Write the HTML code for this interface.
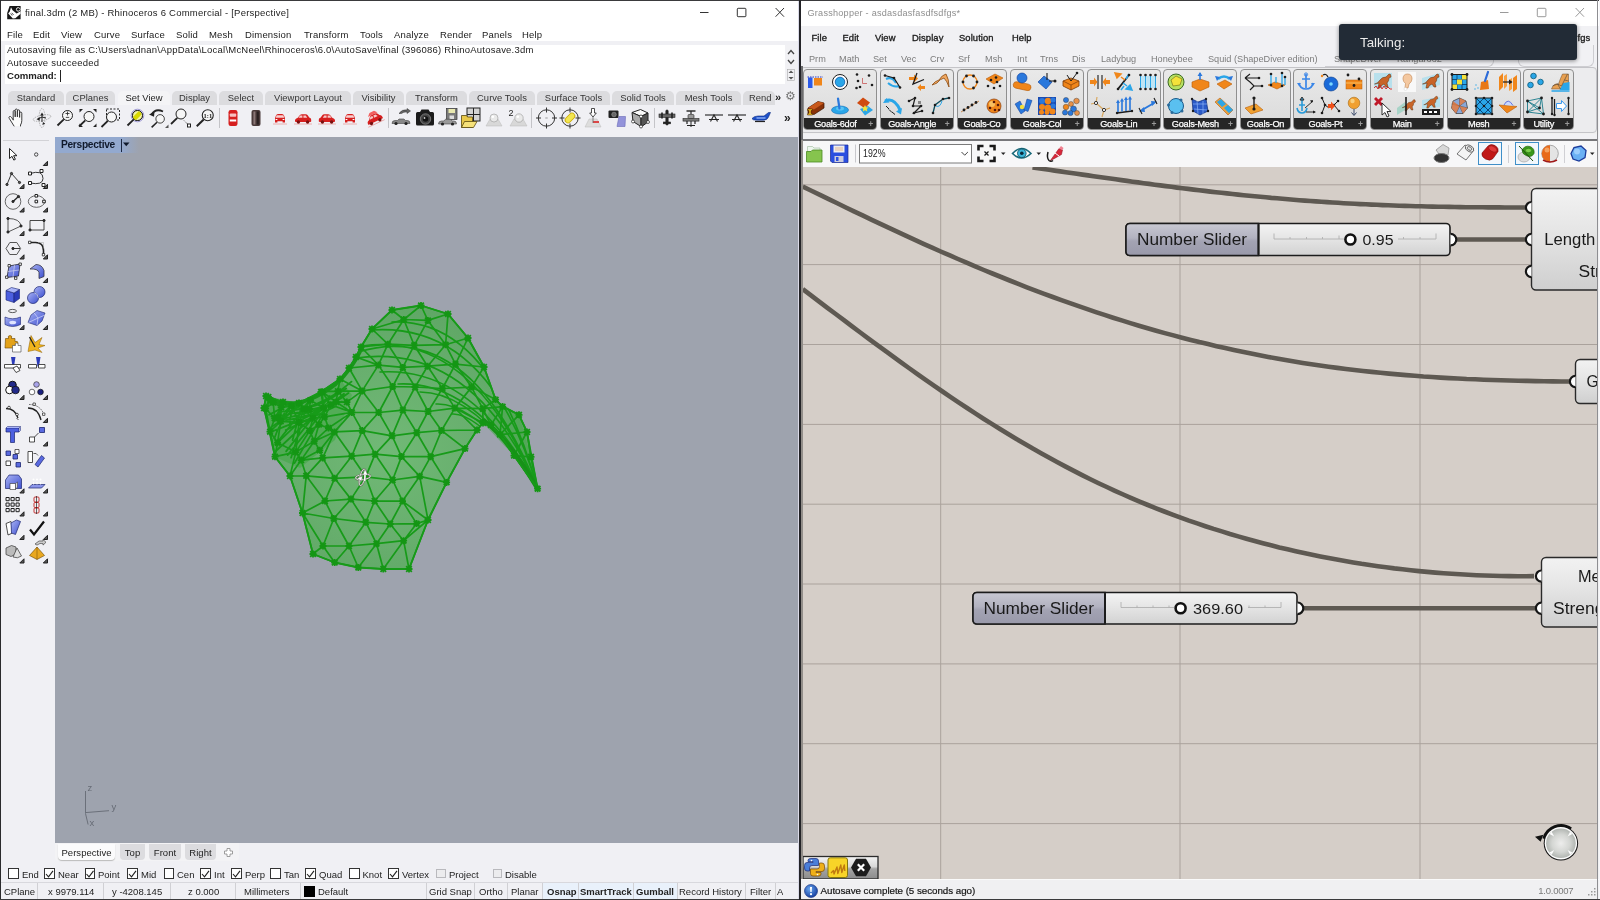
<!DOCTYPE html>
<html lang="en">
<head>
<meta charset="utf-8">
<title>Rhino + Grasshopper</title>
<style>
*{box-sizing:border-box;margin:0;padding:0}
html,body{width:1600px;height:900px;overflow:hidden;background:#f0f0f0;font-family:"Liberation Sans",sans-serif;font-size:10px;color:#111}
.abs{position:absolute}
#rh{position:absolute;left:0;top:0;width:799px;height:900px;background:#f0f0f4;overflow:hidden}
#gh{position:absolute;left:801px;top:0;width:799px;height:900px;background:#f0f0f0;overflow:hidden}
#divider{position:absolute;left:799px;top:0;width:2px;height:900px;background:#232327}
.t{position:absolute;white-space:nowrap;line-height:1}
svg{position:absolute;overflow:visible}
</style>
</head>
<body>
<div id="root" style="position:absolute;left:0;top:0;width:1600px;height:900px;will-change:transform">
<div id="rh">
<!-- title bar -->
<div class="abs" style="left:0;top:0;width:799px;height:41px;background:#fff"></div>
<div class="abs" style="left:0;top:0;width:799px;height:1px;background:#3a3a3c"></div>
<svg style="left:7.200px;top:5.800px" width="14" height="13.500" viewBox="0 0 14 13.500"><path d="M2.600 0H13.600V13.200H0.200V7Z" fill="#161616"/><path d="M4 1.200L5.600 4.200L9.600 7.600L13.600 5.200V7.800L8.400 12.200L5.800 12.600L1.200 7.400L2.800 5.400Z" fill="#fff"/><path d="M3.600 7.400L5.200 9.600M4.800 6.800L6.600 9" stroke="#161616" stroke-width="0.700"/><circle cx="11.200" cy="3.400" r="1.800" fill="none" stroke="#fff" stroke-width="0.900"/><path d="M11.200 3.400h1.800" stroke="#161616" stroke-width="0.800"/></svg>
<div class="t" id="rtitle" style="left:25px;top:8.1px;font-size:9.5px;color:#222;letter-spacing:0.23px">final.3dm (2 MB) - Rhinoceros 6 Commercial - [Perspective]</div>
<svg style="left:690px;top:0" width="108" height="25" viewBox="0 0 108 25" fill="none" stroke="#333" stroke-width="1"><path d="M10 12.5H18.5"/><rect x="47.3" y="8.3" width="8.6" height="8.4" rx="0.8"/><path d="M85.6 8L94 16.7M94 8L85.6 16.7"/></svg>
<!-- menu -->
<div class="t mnu" style="left:7px">File</div>
<div class="t mnu" style="left:33px">Edit</div>
<div class="t mnu" style="left:61px">View</div>
<div class="t mnu" style="left:94px">Curve</div>
<div class="t mnu" style="left:131px">Surface</div>
<div class="t mnu" style="left:176px">Solid</div>
<div class="t mnu" style="left:209px">Mesh</div>
<div class="t mnu" style="left:245px">Dimension</div>
<div class="t mnu" style="left:304px">Transform</div>
<div class="t mnu" style="left:360px">Tools</div>
<div class="t mnu" style="left:394px">Analyze</div>
<div class="t mnu" style="left:440px">Render</div>
<div class="t mnu" style="left:482px">Panels</div>
<div class="t mnu" style="left:522px">Help</div>
<style>.mnu{top:29.5px;font-size:9.5px;color:#1a1a1a;letter-spacing:0.17px}
.cmd{font-size:9.5px;color:#222;letter-spacing:0.22px}
.rtab{position:absolute;top:91px;height:14px;background:#dcdcdf;border-radius:5px 5px 0 0;font-size:9.4px;line-height:14.8px;color:#333;text-align:center;white-space:nowrap;letter-spacing:0.05px}
</style>
<!-- command area -->
<div class="abs" style="left:5px;top:45px;width:792px;height:23.5px;background:#fff"></div>
<div class="abs" style="left:5px;top:69px;width:792px;height:14.5px;background:#fff"></div>
<div class="abs" style="left:785px;top:45px;width:12px;height:23.5px;background:#f1f1f4"></div>
<div class="abs" style="left:785px;top:69px;width:12px;height:14.5px;background:#f1f1f4"></div>
<svg style="left:785px;top:45px" width="12" height="39" viewBox="0 0 12 39" fill="none" stroke="#444" stroke-width="1.3"><path d="M3 9 L6 5.5 L9 9M3 15 L6 18.5 L9 15"/><path d="M3.5 28h5L6 25.5Z M3.5 32h5L6 34.5Z" fill="#555" stroke="none"/><rect x="2.5" y="24.5" width="7" height="11" stroke="#aaa" stroke-width="0.6"/></svg>
<div class="t cmd" style="left:7px;top:45.4px">Autosaving file as C:\Users\adnan\AppData\Local\McNeel\Rhinoceros\6.0\AutoSave\final (396086) RhinoAutosave.3dm</div>
<div class="t cmd" style="left:7px;top:57.7px">Autosave succeeded</div>
<div class="t cmd" style="left:7px;top:71px;font-weight:bold;font-size:9.6px;letter-spacing:-0.05px">Command:</div>
<div class="abs" style="left:60px;top:70px;width:1px;height:12px;background:#222"></div>
<!-- toolbar tabs -->
<div class="rtab" style="left:8px;width:56px">Standard</div>
<div class="rtab" style="left:66px;width:49px">CPlanes</div>
<div class="rtab" style="left:118px;width:52px;background:#f4f4f6;color:#222">Set View</div>
<div class="rtab" style="left:172px;width:45px">Display</div>
<div class="rtab" style="left:219px;width:44px">Select</div>
<div class="rtab" style="left:265px;width:86px">Viewport Layout</div>
<div class="rtab" style="left:353px;width:51px">Visibility</div>
<div class="rtab" style="left:406px;width:61px">Transform</div>
<div class="rtab" style="left:469px;width:66px">Curve Tools</div>
<div class="rtab" style="left:537px;width:73px">Surface Tools</div>
<div class="rtab" style="left:612px;width:62px">Solid Tools</div>
<div class="rtab" style="left:676px;width:65px">Mesh Tools</div>
<div class="rtab" style="left:743px;width:32px;text-align:left;padding-left:6px;overflow:hidden">Rend</div>
<div class="t" style="left:775px;top:92px;font-size:11px;font-weight:bold;color:#222">»</div>
<div class="t" style="left:785px;top:90px;font-size:12px;color:#777">⚙</div>
<!-- top toolbar icons -->
<svg style="left:0;top:104px" width="800" height="30" viewBox="0 104 800 30">
<defs>
<g id="mag" fill="none" stroke="#222"><circle cx="2.5" cy="-2.5" r="5" stroke-width="1" fill="#f6f6f6"/><path d="M-1.2 1.4L-7.5 7.5" stroke-width="1.8"/></g>
<g id="carF"><path d="M-7 6h14" stroke="#e9a0a0" stroke-width="0.8"/><path d="M-5 4.5V1.5q0-2 1-4q0.5-1.5 2-1.5h4q1.5 0 2 1.5q1 2 1 4v3h-2.4v-1.2h-5.2v1.2z" fill="#d61f1f"/><path d="M-3.4-2.8h6.8l0.8 2.6h-8.4z" fill="#f9d0d0"/><rect x="-4.4" y="1" width="1.8" height="1" fill="#fff"/><rect x="2.6" y="1" width="1.8" height="1" fill="#fff"/></g>
<g id="carS"><path d="M-9 6h18" stroke="#e9a0a0" stroke-width="0.8"/><path d="M-8 3.6q-0.4-3 2.5-3.6l2.5-3q0.6-0.8 2-0.8h3.5q1.6 0 2.4 1.2l1.3 2.2q2.3 0.4 2 3.6q0 0.8-1 0.8h-14.2q-1 0-1-0.4z" fill="#d61f1f"/><path d="M-2.8-2.6h2.2v2.4h-4zM0.4-2.6h2.4l1.4 2.4h-3.8z" fill="#f7c8c8"/><circle cx="-4.6" cy="4" r="1.7" fill="#7a1010"/><circle cx="4.6" cy="4" r="1.7" fill="#7a1010"/></g>
<g id="plane" fill="#222" stroke="#222" stroke-width="0.6"><rect x="-1.2" y="-8" width="2.4" height="15" rx="1"/><rect x="-8" y="-4" width="16" height="3.4" fill="#666"/><rect x="-3.6" y="4" width="7.2" height="1.8"/><path d="M-5-5.5v6M5-5.5v6" stroke-width="1.6"/></g>
</defs>
<!-- hand -->
<g transform="translate(16.500,117.500)" stroke-linejoin="round" stroke-linecap="round"><path d="M-3.300 2V-6q0-1 1-1q1 0 1 1V-7.500q0-1 1.100-1q1.100 0 1.100 1V-6.700q0-1 1.100-1q1.100 0 1.100 1V-4.500q0-1 1.100-1q1.100 0 1.100 1V3q0 2.500-1.300 4.500V8.500H-2.500L-7.300 0.800q-0.700-1.300 0.300-1.800q1-0.400 1.900 0.800z" fill="#fbfbfb" stroke="none"/><path d="M-3.300 2.300V-5.800q0-1.200 1-1.200q1 0 1 1.200V-1M-1.300-1V-7.300q0-1.200 1.100-1.200q1.100 0 1.100 1.200V-1M0.900-1V-6.500q0-1.200 1.100-1.200q1.100 0 1.100 1.200V-0.500M3.100-0.500V-4.300q0-1.100 1.100-1.100q1.100 0 1.100 1.100V3q0 2.500-1.300 4.500V8.500M-2.500 8.500L-7.300 0.800q-0.700-1.300 0.300-1.800q1-0.400 1.900 0.800L-3.300 2.300" fill="none" stroke="#333" stroke-width="0.950"/></g>
<!-- rotate gumball -->
<g transform="translate(42,118)" fill="none" stroke="#555" stroke-width="0.7"><ellipse cx="0" cy="0" rx="3" ry="9.500" stroke="#999" stroke-dasharray="1.500 1"/><ellipse cx="0" cy="0" rx="9" ry="2.800" stroke="#999" stroke-dasharray="1.500 1" transform="rotate(-12)"/><path d="M-4 1 l4-2 l4 1 M0-4 v8" stroke="#222" stroke-width="1"/><path d="M-5.500 1.200 l3.200-2.200 v3.800z M0-5.500 l-1.800 3 h3.600z M1 4 l2.200 1.800 l-2.800 1.200z" fill="#222" stroke="none"/></g>
<!-- zoom dynamic -->
<g transform="translate(65,118)"><use href="#mag"/><path d="M0.500-4.500h4M2.500-6.500v4M0.800-0.600h3.400" stroke="#222" stroke-width="0.800"/></g>
<!-- zoom extents -->
<g transform="translate(88,118)"><use href="#mag" transform="translate(-1.500,1)"/><path d="M-8.500-5.500v-3.500h3.500zM8.500-5.500v-3.500h-3.500zM-8.500 5.500v3.500h3.500zM8.500 5.500v3.500h-3.500z" fill="#222"/></g>
<!-- zoom window -->
<g transform="translate(111,118)"><rect x="-4.500" y="-9" width="13" height="11" fill="none" stroke="#222" stroke-width="1" stroke-dasharray="2 1.500"/><use href="#mag" transform="translate(-2,1.500)"/></g>
<!-- zoom selected -->
<g transform="translate(135,118)"><circle cx="2.500" cy="-2.500" r="6.300" fill="#eeeefc" stroke="#8a84c8" stroke-width="0.800"/><use href="#mag"/><circle cx="2.500" cy="-2.500" r="5" fill="#f3f3a0" stroke="#222" stroke-width="1"/><path d="M0.500-0.500l3.500-3.500" stroke="#d8d800" stroke-width="4.500" stroke-linecap="round"/></g>
<!-- undo view -->
<g transform="translate(158,118)"><use href="#mag" transform="translate(0,3) scale(0.850)"/><path d="M-6.500-3.500q4-6.500 11.500-3" fill="none" stroke="#222" stroke-width="1.800"/><path d="M-9-3.500l5.500-2.800l-0.500 5z" fill="#222"/><path d="M10.500 6.500v3.500h-3.500z" fill="#555"/></g>
<!-- zoom target -->
<g transform="translate(181,118)"><use href="#mag" transform="translate(-2.500,-1.500)"/><path d="M3 2.500l4 4" stroke="#222" stroke-width="0.800" stroke-dasharray="1 1"/><rect x="6.500" y="6" width="3" height="3" fill="#fff" stroke="#222" stroke-width="1"/></g>
<!-- 1:1 -->
<g transform="translate(205,118)"><use href="#mag" transform="scale(1.100)"/><text x="2.800" y="0.200" font-size="6.500" font-weight="bold" text-anchor="middle" fill="#222" font-family="Liberation Serif,serif">1:1</text></g>
<path d="M219.500 108v20M388.500 108v20M531.500 108v20M654.500 108v20" stroke="#c4c4c8" stroke-width="1"/>
<!-- car top red / dark -->
<g transform="translate(233,118)"><rect x="-4.500" y="-8" width="9" height="16" rx="2.200" fill="#d61f1f"/><rect x="-3.200" y="-4.500" width="6.400" height="3.200" rx="0.800" fill="#f7c0c0"/><rect x="-3.200" y="1.500" width="6.400" height="2" fill="#fff"/></g>
<g transform="translate(256,118)"><rect x="-4.500" y="-8" width="9" height="16" rx="2" fill="#4a3a3a"/><rect x="-2.600" y="-6.500" width="2" height="13" fill="#8a7676"/><rect x="0.800" y="-6.500" width="2" height="13" fill="#2a2020"/></g>
<use href="#carF" transform="translate(280,118)"/>
<use href="#carS" transform="translate(303,118)"/>
<use href="#carS" transform="translate(327,118) scale(-1,1)"/>
<use href="#carF" transform="translate(350,118)"/>
<g transform="translate(374,118) rotate(-25)"><use href="#carS"/><path d="M-5-3.500l3-3h5l2.500 2.800z" fill="#f26060"/></g>
<!-- car + hand -->
<g transform="translate(401,118)"><path d="M-9 5.500q0-3 3-3h2.500l1.500-1.500h5l1.500 1.500h2q2.500 0 2.500 3z" fill="#888" stroke="#444" stroke-width="0.600"/><circle cx="-5" cy="5.500" r="1.600" fill="#222"/><circle cx="5" cy="5.500" r="1.600" fill="#222"/><path d="M-2-4.500q3-4.500 8-3.500v-1.500l3.500 2.500l-3.500 2.500v-1.500q-3.500-0.500-5.500 1.500z" fill="#666" stroke="#333" stroke-width="0.500"/></g>
<!-- camera -->
<g transform="translate(425,118)"><path d="M-9-4.500q0-1.500 1.500-1.500h2.500l1.500-2.500h7l1.500 2.500h2.500q1.500 0 1.500 1.500v10.500q0 1.500-1.500 1.500h-15q-1.500 0-1.500-1.500z" fill="#1b1b1b"/><circle cx="0.500" cy="1" r="5.200" fill="#444" stroke="#888" stroke-width="0.800"/><circle cx="0.500" cy="1" r="2.800" fill="#111"/><circle cx="-0.500" cy="0" r="0.900" fill="#ccc"/></g>
<!-- car + save -->
<g transform="translate(448,118)"><rect x="-1.500" y="-9.500" width="10.500" height="11" fill="#7a7a7a" stroke="#333" stroke-width="0.700"/><rect x="0.500" y="-9" width="6.500" height="4" fill="#e9e9b0"/><rect x="1.500" y="-2.500" width="4.500" height="3.500" fill="#ddd"/><path d="M-9.500 6q0-3 3-3h2.500l1.500-1.800h5l1.500 1.800h2q2.500 0 2.500 3z" fill="#9a9a9a" stroke="#444" stroke-width="0.600"/><circle cx="-5.500" cy="6" r="1.600" fill="#222"/><circle cx="4.500" cy="6" r="1.600" fill="#222"/></g>
<!-- folder + grid -->
<g transform="translate(471,118)"><rect x="-4" y="-10" width="13" height="13" fill="#d4d4d4" stroke="#222" stroke-width="1"/><path d="M2.500-10v13M-4-3.500h13" stroke="#222" stroke-width="1"/><path d="M-9.500-2.500h5l1 1.500h5v10.500h-11z" fill="#e8c84a" stroke="#5a4a10" stroke-width="0.800"/><path d="M-9.500 9.500l3-6h12.500l-3.500 6z" fill="#f7e27a" stroke="#5a4a10" stroke-width="0.800"/></g>
<!-- sphere -->
<g transform="translate(494,118)"><path d="M-8 8l4-7h8l4 7z" fill="#d8d8d8" stroke="#bbb" stroke-width="0.500"/><circle cx="0" cy="0" r="4" fill="#e9e9e9" stroke="#999" stroke-width="0.600"/><circle cx="-1.200" cy="-1.300" r="1.300" fill="#fff"/></g>
<g transform="translate(517,118)"><path d="M-7 8l4-7h9l4 7z" fill="#d8d8d8" stroke="#bbb" stroke-width="0.500"/><circle cx="2" cy="0" r="4.200" fill="#e9e9e9" stroke="#999" stroke-width="0.600"/><circle cx="0.800" cy="-1.300" r="1.300" fill="#fff"/><text x="-8.500" y="-2.500" font-size="9" fill="#222" font-family="Liberation Sans,sans-serif">2</text></g>
<!-- targets -->
<g transform="translate(546.500,118)" fill="none" stroke="#333" stroke-width="1"><circle r="8.200"/><path d="M0-10.500v5M0 10.500v-5M-10.500 0h5M10.500 0h-5"/><path d="M-1.200 0h2.400" stroke="#999"/></g>
<g transform="translate(570,118)" fill="none" stroke="#333" stroke-width="1"><circle r="8.200"/><path d="M0-10.500v5M0 10.500v-5M-10.500 0h5M10.500 0h-5"/><path d="M-2 2l4-4" stroke="#caa800" stroke-width="6.500" stroke-linecap="round"/><path d="M-2 2l4-4" stroke="#f2e650" stroke-width="5" stroke-linecap="round"/></g>
<!-- arrow to plane -->
<g transform="translate(593,118)"><path d="M-8 9l4-8h8l4 8z" fill="#ddd" stroke="#bbb" stroke-width="0.500"/><path d="M0 4h6" stroke="#d22" stroke-width="1.600"/><path d="M-1.500-9.500h3v4.500h1.800l-3.300 4l-3.300-4h1.800z" fill="#fff" stroke="#222" stroke-width="0.800"/><path d="M0-1v6" stroke="#666" stroke-width="0.800"/></g>
<!-- camera + blue -->
<g transform="translate(617,118)"><rect x="-8.500" y="-7.500" width="10" height="7.500" rx="1" fill="#222"/><circle cx="-3" cy="-3.500" r="2.300" fill="#666" stroke="#aaa" stroke-width="0.500"/><path d="M2-1.500h6.500l-0.500 10h-8z" fill="#8a8ad8" stroke="#5a5ab0" stroke-width="0.600" opacity="0.900"/></g>
<!-- cube -->
<g transform="translate(640,118)" stroke="#222" stroke-width="1" stroke-linejoin="round"><path d="M-8-5.500l8.500-3l7.500 3.500l-7 3.500z" fill="#fafafa"/><path d="M-8-5.500l9 4v10l-8-5z" fill="#aaa"/><path d="M1-1.500l7-3.500v9l-7 5z" fill="#555"/><circle cx="1" cy="-1.500" r="1.500" fill="#fff" stroke-width="0.700"/><circle cx="-7" cy="3.500" r="1.500" fill="#fff" stroke-width="0.700"/><circle cx="8" cy="4" r="1.500" fill="#fff" stroke-width="0.700"/><circle cx="1" cy="8.500" r="1.500" fill="#fff" stroke-width="0.700"/></g>
<!-- planes -->
<use href="#plane" transform="translate(667,118)"/>
<g transform="translate(691,118)" fill="#333" stroke="#222" stroke-width="0.600"><rect x="-8" y="0.500" width="16" height="2.600" fill="#777"/><rect x="-3" y="-3.500" width="6" height="4" rx="1" fill="#999"/><path d="M-4.500-7h9" stroke-width="1.400"/><path d="M0-7v3M-4 3v3M4 3v3M-4 7.500h8" stroke-width="1.200"/><path d="M0 3v6" stroke-width="1"/></g>
<g transform="translate(714,118)" fill="none" stroke="#222" stroke-width="1.100"><path d="M-9-3h18"/><path d="M-3.500 3.500l3.500-6.500l3.500 6.500M-5 1.500h10"/></g>
<g transform="translate(737,118)" fill="none" stroke="#222" stroke-width="1.100"><path d="M-9-3h18"/><path d="M-3.500 3.500l3.500-6.500l3.500 6.500M-5 1.500h10"/></g>
<g transform="translate(761,118)"><path d="M-9 0.500q2-2.500 6-2.500h6l4.500-3.500h2l-2 4.500q-1 3-5 3.200h-7q-4 0-4.500-1.700z" fill="#1e50c8" stroke="#0a2a80" stroke-width="0.600"/><path d="M-4.500 0h9" stroke="#9ec0ff" stroke-width="1.200"/><path d="M-6 3.500h10" stroke="#222" stroke-width="1.200"/></g>
<text x="784" y="121.500" font-size="12" font-weight="bold" fill="#222" font-family="Liberation Sans,sans-serif">»</text>
</svg>
<!-- left sidebar -->
<div class="abs" style="left:3px;top:139.500px;width:46px;height:1px;background:#d2d2d6"></div>
<svg style="left:0;top:140px" width="54" height="430" viewBox="0 140 54 430">
<defs>
<path id="ct" d="M0 0v-4.200l-4.200 4.200z" fill="#555"/>
<linearGradient id="bl" x1="0" y1="0" x2="1" y2="1"><stop offset="0" stop-color="#aab4f4"/><stop offset="1" stop-color="#3d4fcf"/></linearGradient>
</defs>
<g fill="none" stroke="#222" stroke-width="1" stroke-linejoin="round">
<!-- row1 -->
<path d="M9.500 148.500v10l2.500-2.200l1.800 3.800l1.600-0.800l-1.800-3.600h3.400z" fill="#fff"/>
<circle cx="36.200" cy="154.500" r="1.700" stroke-width="0.800"/><use href="#ct" x="47.500" y="165.500"/>
<!-- row2 -->
<path d="M7 184.500l4.500-11l8 9" stroke-width="0.900"/><circle cx="7" cy="184.500" r="1.100" fill="#555"/><circle cx="11.500" cy="173.500" r="1.100" fill="#555"/><circle cx="19.500" cy="182.500" r="1.100" fill="#555"/><use href="#ct" x="24" y="188.500"/>
<path d="M30 173.500q13-4 13 5q0 7-13 4.500" stroke-width="0.900"/><rect x="28.500" y="172" width="3" height="3" fill="#fff"/><rect x="40" y="169.500" width="3" height="3" fill="#fff"/><rect x="28.500" y="181.500" width="3" height="3" fill="#fff"/><rect x="42" y="183.500" width="3" height="3" fill="#fff"/><use href="#ct" x="47.500" y="188.500"/>
<!-- row3 -->
<circle cx="13" cy="201.500" r="7.800" stroke-width="0.800" stroke="#444"/><path d="M13 201.500l5.500-5" stroke-width="1.300"/><circle cx="13" cy="201.500" r="1.100" fill="#333"/><circle cx="18.500" cy="196.500" r="1.100" fill="#333"/><use href="#ct" x="24" y="212"/>
<ellipse cx="36.500" cy="201.500" rx="8.200" ry="5.800" stroke-width="0.800" stroke="#444"/><rect x="35" y="194.500" width="2.600" height="2.600" fill="#fff"/><rect x="35" y="200.200" width="2.600" height="2.600" fill="#fff"/><rect x="42.700" y="200.200" width="2.600" height="2.600" fill="#fff"/><use href="#ct" x="47.500" y="212"/>
<!-- row4 -->
<path d="M8 218.500q12 0 13 7.500l-13 6z" stroke-width="0.900" stroke="#444"/><circle cx="8" cy="218.500" r="1.100" fill="#333"/><circle cx="21" cy="226" r="1.100" fill="#333"/><circle cx="8" cy="232" r="1.100" fill="#333"/><use href="#ct" x="24" y="235.500"/>
<rect x="30" y="220.500" width="14" height="9.500" stroke-width="0.900" stroke="#333"/><circle cx="30" cy="230" r="1.100" fill="#333"/><circle cx="44" cy="220.500" r="1.100" fill="#333"/><use href="#ct" x="47.500" y="235.500"/>
<!-- row5 -->
<path d="M6 248.500l3.800-6h7l3.800 6l-3.800 6h-7z" stroke-width="0.900" stroke="#444"/><path d="M13 248.500h7" stroke-width="0.900"/><circle cx="13" cy="248.500" r="1.100" fill="#333"/><use href="#ct" x="24" y="259"/>
<path d="M29.500 242.500h6q8 0 8 8v4.500" stroke-width="1.600"/><path d="M38 242.500h5.500v6" stroke="#aaa" stroke-width="0.600"/><rect x="28.500" y="241.200" width="2.400" height="2.400" fill="#fff" stroke-width="0.800"/><rect x="42.300" y="253.500" width="2.400" height="2.400" fill="#fff" stroke-width="0.800"/><use href="#ct" x="47.500" y="259"/>
<!-- row6 -->
<path d="M9 266l11-2l-1.500 12l-11.500 1.500z" fill="url(#bl)" stroke="#223" stroke-width="0.800"/><path d="M14.500 265l-1.500 12M8 271.500l11-1.500" stroke="#dde" stroke-width="0.600"/><rect x="8" y="264.500" width="2.400" height="2.400" fill="#fff" stroke-width="0.800"/><rect x="19" y="263" width="2.400" height="2.400" fill="#fff" stroke-width="0.800"/><rect x="5.500" y="276" width="2.400" height="2.400" fill="#fff" stroke-width="0.800"/><rect x="14.500" y="277" width="2.400" height="2.400" fill="#fff" stroke-width="0.800"/><use href="#ct" x="24" y="282.500"/>
<path d="M30 269l6-4.500q6 0 8 6v6l-5 2v-6q-1-4-9-3.500z" fill="url(#bl)" stroke="#334" stroke-width="0.800"/><use href="#ct" x="47.500" y="282.500"/>
<!-- row7 -->
<path d="M6 290.500l8 2.500v9.500l-8-2.500z" fill="#4c5fe0" stroke="#1a2470" stroke-width="0.600"/><path d="M14 293l5.500-3.500v9l-5.500 4z" fill="#2a3ab8" stroke="#1a2470" stroke-width="0.600"/><path d="M6 290.500l5.500-3l8 2l-5.500 3.500z" fill="#a9b4f8" stroke="#1a2470" stroke-width="0.600"/><use href="#ct" x="24" y="306"/>
<circle cx="39.500" cy="292" r="5.500" fill="url(#bl)" stroke="#1a2470" stroke-width="0.700"/><circle cx="33" cy="298" r="5.500" fill="url(#bl)" stroke="#1a2470" stroke-width="0.700"/><path d="M34.200 292.700q4 1 4.200 5.200" stroke="#fff" stroke-width="0.600"/><use href="#ct" x="47.500" y="306"/>
<!-- row8 -->
<ellipse cx="12.500" cy="311" rx="4" ry="1.600" stroke-width="0.800" stroke="#333"/><path d="M5 317q7.500 3.500 15.500 0v7.500q-8 4-15.500 0z" fill="url(#bl)" stroke="#1a2470" stroke-width="0.600"/><ellipse cx="12.700" cy="322.500" rx="3.500" ry="1.800" fill="#dfe4ff" stroke="none"/><use href="#ct" x="24" y="329.500"/>
<path d="M31 315l6-4.500l8 2.500l-3 8l-5 4.500l-9-3z" fill="url(#bl)" stroke="#1a2470" stroke-width="0.600"/><path d="M34 312.800l4 5.200l7-3M28.500 322.500l9.500-4.500l-1 7" stroke="#e4e8ff" stroke-width="0.600"/><use href="#ct" x="47.500" y="329.500"/>
<!-- row9 -->
<path d="M5.500 338.500h3q-1-3 1.500-3q2.500 0 1.500 3h3.500v3q3-1 3 1.500q0 2.500-3 1.500v3.500h-10z" fill="#e3a21a" stroke="#6a4400" stroke-width="0.600"/><path d="M12.500 345.500h3q-1-2.500 1.200-2.500q2.300 0 1.300 2.500h3v6.500h-8.500z" fill="#fff" stroke="#444" stroke-width="0.600"/>
<path d="M28 351.500l3-16l4 7l7-5l-3 7l6 1l-7 2.500l4 4.500l-7-2.500z" fill="#f0b41c" stroke="#8a5a00" stroke-width="0.500"/><path d="M29.500 337l5.500 10" stroke="#222" stroke-width="1.300"/>
<!-- row10 -->
<path d="M11 357h4.500l-1.500 9.500h-1.500z" fill="#2a3ab8" stroke="none"/><path d="M4.500 364.500h16v3.500h-16z" fill="#fff" stroke-width="0.800"/><path d="M13 368l4-2l3 4.500l-4 2z" fill="#fff" stroke-width="0.800"/>
<path d="M36 357h4.500l-1.500 9.500h-1.500z" fill="#2a3ab8" stroke="none"/><path d="M28.500 364.500h8v3.500h-8zM38.500 364.500h6.500v3.500h-6.500z" fill="#fff" stroke-width="0.800"/>
<!-- row11 -->
<circle cx="12.500" cy="385" r="3.800" fill="#222a8a" stroke="#111"/><circle cx="9.500" cy="390" r="3.800" fill="#fff" stroke="#111"/><circle cx="15.500" cy="390" r="3.800" fill="#222a8a" stroke="#111" stroke-width="0.800"/><use href="#ct" x="24" y="399.500"/>
<circle cx="36.500" cy="384.500" r="2.800" fill="#a9a4e8" stroke="#333" stroke-width="0.700"/><circle cx="32" cy="392" r="2.800" fill="#fff" stroke="#333" stroke-width="0.700"/><circle cx="40.500" cy="392" r="2.800" fill="#1a2080" stroke="#111" stroke-width="0.700"/><use href="#ct" x="47.500" y="399.500"/>
<!-- row12 -->
<path d="M6 408.500q9 0 12 9.500" stroke-width="1.300"/><circle cx="9" cy="407.500" r="1.300" fill="#fff" stroke-width="0.800"/><circle cx="17" cy="414.500" r="1.300" fill="#fff" stroke-width="0.800"/><path d="M16.500 418l2 2" stroke-width="0.800"/>
<path d="M28 408q10 0 13 12" stroke-width="1.300"/><path d="M29 404.500q11 0 15 10" stroke-width="0.700" stroke-dasharray="1.500 1"/><rect x="33" y="403" width="2.400" height="2.400" fill="#fff" stroke-width="0.700"/><rect x="42.500" y="413" width="2.400" height="2.400" fill="#fff" stroke-width="0.700"/><use href="#ct" x="47.500" y="422.500"/>
<!-- row13 -->
<path d="M6 428h13v4h-4.500v10.500h-4v-10.500h-4.500z" fill="#4c5fe0" stroke="#1a2470" stroke-width="0.700"/><path d="M6 428l1.500-1.500h13l-1.500 1.500M19 432l1.500-1.500v-4" fill="#a9b4f8" stroke="#1a2470" stroke-width="0.500"/>
<rect x="29.500" y="437" width="5" height="5" fill="#fff" stroke-width="0.800"/><rect x="39.500" y="427.500" width="5" height="5" fill="#5a6ae0" stroke="#1a2470" stroke-width="0.800"/><path d="M34.500 437l4-4" stroke-width="0.800"/><use href="#ct" x="47.500" y="446"/>
<!-- row14 -->
<rect x="6" y="451" width="4.500" height="4.500" fill="#5a6ae0" stroke="#1a2470" stroke-width="0.800"/><rect x="13" y="454.500" width="4.500" height="4.500" fill="#5a6ae0" stroke="#1a2470" stroke-width="0.800"/><rect x="6" y="461" width="4.500" height="4.500" fill="#fff" stroke-width="0.800"/><rect x="16" y="462.500" width="4.500" height="4.500" fill="#5a6ae0" stroke="#1a2470" stroke-width="0.800"/><rect x="15" y="449.500" width="4" height="4" fill="#fff" stroke-width="0.700"/>
<rect x="28" y="451.500" width="4.500" height="11" fill="#fff" stroke-width="0.800"/><path d="M35 464.500l6.500-9l3 2.500l-6.500 9z" fill="#5a6ae0" stroke="#1a2470" stroke-width="0.700"/><path d="M33.500 453.500q3-1 4.500 2" stroke-width="0.700"/>
<!-- row15 -->
<path d="M5.500 480l3.500-5h9.500l3 4v9.500h-16z" fill="url(#bl)" stroke="#1a2470" stroke-width="0.700"/><path d="M10 483.500h5.500v6h-5.500z" fill="#fff" stroke="#333" stroke-width="0.600"/><path d="M15.500 483.500l2-1.500v5l-2 2.500z" fill="#ddd" stroke="#333" stroke-width="0.500"/><use href="#ct" x="24" y="493"/>
<path d="M28.500 488l3.500-3.500h13l-3.500 3.500z" fill="#8a94ea" stroke="#1a2470" stroke-width="0.700"/><circle cx="33.500" cy="479.500" r="1" fill="#fff" stroke="none"/><circle cx="37" cy="479.500" r="1" fill="#fff" stroke="none"/><circle cx="40.500" cy="479.500" r="1" fill="#fff" stroke="none"/><path d="M33.500 482v2.500M37 482v2.500M40.500 482v2.500" stroke="#fff" stroke-width="0.800"/><use href="#ct" x="47.500" y="493"/>
<!-- row16 -->
<g stroke-width="1"><rect x="6" y="497.500" width="3.200" height="3.200"/><rect x="11" y="497.500" width="3.200" height="3.200"/><rect x="16" y="497.500" width="3.200" height="3.200"/><rect x="6" y="503" width="3.200" height="3.200"/><rect x="11" y="503" width="3.200" height="3.200"/><rect x="16" y="503" width="3.200" height="3.200"/><rect x="6" y="508.500" width="3.200" height="3.200"/><rect x="11" y="508.500" width="3.200" height="3.200"/><rect x="16" y="508.500" width="3.200" height="3.200"/></g><use href="#ct" x="24" y="516"/>
<g stroke="#c02020" stroke-width="0.900"><rect x="34" y="497" width="5" height="5" rx="1"/><rect x="34" y="502.500" width="5" height="5" rx="1"/><rect x="34" y="508" width="5" height="5" rx="1"/></g><path d="M36.500 496v18" stroke="#222" stroke-width="0.700"/><use href="#ct" x="47.500" y="516"/>
<!-- row17 -->
<path d="M6 523.500l5-2l1.500 11.500l-4.500 2z" fill="#fff" stroke-width="0.800"/><path d="M11 523l5.500-3l4 1.500l-5 13l-4-1.500z" fill="url(#bl)" stroke="#1a2470" stroke-width="0.700"/><use href="#ct" x="24" y="539.500"/>
<path d="M30 529.500l4 5l10-13" stroke="#111" stroke-width="2.200" stroke-linejoin="miter"/><use href="#ct" x="47.500" y="539.500"/>
<!-- row18 -->
<path d="M6 548l5.500-2.500l4.500 1.500v7l-5 2.500l-5-2z" fill="#bbb" stroke="#333" stroke-width="0.700"/><path d="M13 557l4-9l4.500 8q-4 3-8.500 1z" fill="#ddd" stroke="#333" stroke-width="0.700"/><use href="#ct" x="24" y="563"/>
<path d="M29.500 555.500l7.500-8.500l7.500 8.500l-7.500 4z" fill="#e9a820" stroke="#6a4400" stroke-width="0.600"/><path d="M37 547v12.500" stroke="#6a4400" stroke-width="0.500"/><path d="M35 544q4-4.500 8-3v-1.500l3 2.800l-3 2.800v-1.500q-3-1-6 1.500z" fill="#ccc" stroke="#333" stroke-width="0.600"/><use href="#ct" x="47.500" y="563"/>
</g>
</svg>
<!-- viewport -->
<div class="abs" style="left:54.500px;top:137px;width:743px;height:705.500px;background:#9ea3ae"></div>
<div class="abs" style="left:54.500px;top:137px;width:84px;height:16px;background:linear-gradient(90deg,#93a9cf 0,#93a9cf 78%,#9ea3ae 100%)"></div>
<div class="t" style="left:61px;top:139.500px;font-size:10.200px;letter-spacing:-0.300px;font-weight:bold;color:#111a2c">Perspective</div>
<div class="abs" style="left:121px;top:139px;width:1px;height:12.500px;background:#1c2740"></div>
<svg style="left:123px;top:142px" width="7" height="5" viewBox="0 0 7 5"><path d="M0 0.500h6.500l-3.250 3.800z" fill="#111a2c"/></svg>
<svg style="left:54px;top:137px" width="744" height="706" viewBox="54 137 744 706">
<defs><radialGradient id="mg" cx="0.450" cy="0.550" r="0.600"><stop offset="0" stop-color="#71b976"/><stop offset="0.600" stop-color="#67ae6d"/><stop offset="1" stop-color="#5ea564"/></radialGradient><clipPath id="mc"><path d="M266.0 396.0L283.0 402.0L299.0 403.0L321.0 392.0L340.0 379.0L349.0 368.0L356.0 357.0L361.0 347.0L372.0 329.0L392.0 310.0L421.0 305.5L448.0 314.0L468.0 338.0L484.0 367.0L495.6 399.6L502.6 406.6L519.0 414.8L527.0 432.0L531.0 456.8L537.6 488.7L514.0 455.6L500.0 434.6L491.0 425.0L483.0 423.0L477.0 430.0L465.0 448.6L446.6 482.4L428.0 520.0L409.0 569.0L383.3 569.0L358.3 567.5L334.7 562.5L313.0 554.0L302.5 513.0L290.0 476.0L275.0 456.7L270.0 431.7L264.0 408.0Z"/></clipPath></defs>
<path d="M266.0 396.0L283.0 402.0L299.0 403.0L321.0 392.0L340.0 379.0L349.0 368.0L356.0 357.0L361.0 347.0L372.0 329.0L392.0 310.0L421.0 305.5L448.0 314.0L468.0 338.0L484.0 367.0L495.6 399.6L502.6 406.6L519.0 414.8L527.0 432.0L531.0 456.8L537.6 488.7L514.0 455.6L500.0 434.6L491.0 425.0L483.0 423.0L477.0 430.0L465.0 448.6L446.6 482.4L428.0 520.0L409.0 569.0L383.3 569.0L358.3 567.5L334.7 562.5L313.0 554.0L302.5 513.0L290.0 476.0L275.0 456.7L270.0 431.7L264.0 408.0Z" fill="url(#mg)"/>
<path d="M266 396L299 403L340 379L352 395L335 440L300 468L275 457L264 408Z" fill="#3fa843" opacity="0.550"/>
<path d="M483 423L495.600 399.600L519 414.800L531 456.800L537.600 488.700L514 455.600Z" fill="#4aa64e" opacity="0.600"/>
<path d="M266.0 396.0L264.0 408.0M266.0 396.0L270.4 400.4M266.0 396.0L268.4 397.0M283.0 402.0L299.0 403.0M283.0 402.0L270.4 400.4M283.0 402.0L281.2 407.3M283.0 402.0L273.2 402.6M283.0 402.0L268.4 397.0M283.0 402.0L291.5 406.1M299.0 403.0L321.0 392.0M299.0 403.0L303.9 409.2M299.0 403.0L310.4 400.2M299.0 403.0L291.5 406.1M321.0 392.0L340.0 379.0M321.0 392.0L323.6 408.0M321.0 392.0L322.1 391.7M321.0 392.0L310.4 400.2M340.0 379.0L349.0 368.0M340.0 379.0L362.2 390.9M340.0 379.0L337.9 391.2M340.0 379.0L322.1 391.7M349.0 368.0L356.0 357.0M349.0 368.0L378.4 365.1M349.0 368.0L362.2 390.9M356.0 357.0L361.0 347.0M356.0 357.0L378.4 365.1M361.0 347.0L372.0 329.0M361.0 347.0L387.9 344.2M361.0 347.0L378.4 365.1M372.0 329.0L392.0 310.0M372.0 329.0L403.8 319.5M372.0 329.0L387.9 344.2M392.0 310.0L421.0 305.5M392.0 310.0L403.8 319.5M421.0 305.5L448.0 314.0M421.0 305.5L403.8 319.5M421.0 305.5L427.9 320.4M448.0 314.0L468.0 338.0M448.0 314.0L427.9 320.4M448.0 314.0L445.6 344.7M468.0 338.0L484.0 367.0M468.0 338.0L445.6 344.7M468.0 338.0L455.5 364.1M484.0 367.0L495.6 399.6M484.0 367.0L455.5 364.1M484.0 367.0L471.5 387.1M495.6 399.6L502.6 406.6M495.6 399.6L471.5 387.1M495.6 399.6L482.8 408.7M502.6 406.6L519.0 414.8M502.6 406.6L500.0 434.6M502.6 406.6L491.0 425.0M502.6 406.6L482.8 408.7M519.0 414.8L527.0 432.0M519.0 414.8L500.0 434.6M527.0 432.0L531.0 456.8M527.0 432.0L537.6 488.7M527.0 432.0L514.0 455.6M527.0 432.0L500.0 434.6M531.0 456.8L537.6 488.7M531.0 456.8L514.0 455.6M537.6 488.7L514.0 455.6M514.0 455.6L500.0 434.6M500.0 434.6L491.0 425.0M491.0 425.0L483.0 423.0M491.0 425.0L482.8 408.7M483.0 423.0L477.0 430.0M483.0 423.0L454.9 408.1M483.0 423.0L482.8 408.7M477.0 430.0L465.0 448.6M477.0 430.0L454.9 408.1M477.0 430.0L441.5 430.5M465.0 448.6L446.6 482.4M465.0 448.6L441.5 430.5M465.0 448.6L430.7 456.7M446.6 482.4L428.0 520.0M446.6 482.4L430.7 456.7M446.6 482.4L419.7 476.3M428.0 520.0L409.0 569.0M428.0 520.0L419.7 476.3M428.0 520.0L402.5 501.1M428.0 520.0L416.6 523.6M428.0 520.0L403.6 540.7M409.0 569.0L383.3 569.0M409.0 569.0L403.6 540.7M383.3 569.0L358.3 567.5M383.3 569.0L376.5 543.7M383.3 569.0L403.6 540.7M358.3 567.5L334.7 562.5M358.3 567.5L349.0 546.0M358.3 567.5L376.5 543.7M334.7 562.5L313.0 554.0M334.7 562.5L323.0 546.0M334.7 562.5L349.0 546.0M313.0 554.0L302.5 513.0M313.0 554.0L323.0 546.0M302.5 513.0L290.0 476.0M302.5 513.0L306.2 475.8M302.5 513.0L325.0 501.0M302.5 513.0L333.8 518.5M302.5 513.0L323.0 546.0M290.0 476.0L275.0 456.7M290.0 476.0L295.8 452.1M290.0 476.0L306.2 475.8M290.0 476.0L301.2 460.1M275.0 456.7L270.0 431.7M275.0 456.7L264.0 408.0M275.0 456.7L295.8 452.1M275.0 456.7L277.6 442.7M270.0 431.7L264.0 408.0M270.0 431.7L274.7 418.3M270.0 431.7L277.6 442.7M270.0 431.7L265.6 408.5M270.0 431.7L280.7 421.3M264.0 408.0L270.4 400.4M264.0 408.0L265.6 408.5M403.8 319.5L427.9 320.4M403.8 319.5L387.9 344.2M403.8 319.5L414.2 345.3M427.9 320.4L414.2 345.3M427.9 320.4L445.6 344.7M387.9 344.2L414.2 345.3M387.9 344.2L378.4 365.1M387.9 344.2L402.8 367.4M414.2 345.3L445.6 344.7M414.2 345.3L402.8 367.4M414.2 345.3L427.6 366.2M445.6 344.7L427.6 366.2M445.6 344.7L455.5 364.1M378.4 365.1L402.8 367.4M378.4 365.1L362.2 390.9M378.4 365.1L392.7 386.5M402.8 367.4L427.6 366.2M402.8 367.4L392.7 386.5M402.8 367.4L415.1 387.0M427.6 366.2L455.5 364.1M427.6 366.2L415.1 387.0M427.6 366.2L442.4 388.5M455.5 364.1L442.4 388.5M455.5 364.1L471.5 387.1M362.2 390.9L392.7 386.5M362.2 390.9L351.9 412.4M362.2 390.9L378.7 412.5M362.2 390.9L346.9 402.1M362.2 390.9L337.9 391.2M392.7 386.5L415.1 387.0M392.7 386.5L378.7 412.5M392.7 386.5L402.9 410.1M415.1 387.0L442.4 388.5M415.1 387.0L402.9 410.1M415.1 387.0L428.1 411.5M442.4 388.5L471.5 387.1M442.4 388.5L428.1 411.5M442.4 388.5L454.9 408.1M471.5 387.1L454.9 408.1M471.5 387.1L482.8 408.7M323.6 408.0L322.1 391.7M323.6 408.0L309.4 409.2M323.6 408.0L312.8 418.2M323.6 408.0L324.6 416.9M323.6 408.0L310.4 400.2M323.6 408.0L330.8 404.8M351.9 412.4L378.7 412.5M351.9 412.4L334.5 431.9M351.9 412.4L362.2 430.6M351.9 412.4L346.9 402.1M351.9 412.4L336.1 402.0M351.9 412.4L324.6 416.9M351.9 412.4L330.8 404.8M351.9 412.4L328.5 428.0M378.7 412.5L402.9 410.1M378.7 412.5L362.2 430.6M378.7 412.5L392.1 435.8M402.9 410.1L428.1 411.5M402.9 410.1L392.1 435.8M402.9 410.1L416.8 432.7M428.1 411.5L454.9 408.1M428.1 411.5L416.8 432.7M428.1 411.5L441.5 430.5M454.9 408.1L482.8 408.7M454.9 408.1L441.5 430.5M309.7 430.7L295.8 452.1M309.7 430.7L299.0 422.4M309.7 430.7L312.8 418.2M309.7 430.7L318.9 424.6M309.7 430.7L314.2 441.3M334.5 431.9L362.2 430.6M334.5 431.9L322.7 457.9M334.5 431.9L351.7 456.2M334.5 431.9L314.2 441.3M334.5 431.9L319.8 450.3M334.5 431.9L328.5 428.0M362.2 430.6L392.1 435.8M362.2 430.6L351.7 456.2M362.2 430.6L375.1 454.2M392.1 435.8L416.8 432.7M392.1 435.8L375.1 454.2M392.1 435.8L401.5 456.6M416.8 432.7L441.5 430.5M416.8 432.7L401.5 456.6M416.8 432.7L430.7 456.7M441.5 430.5L430.7 456.7M295.8 452.1L277.6 442.7M295.8 452.1L299.0 422.4M295.8 452.1L301.2 460.1M295.8 452.1L314.2 441.3M322.7 457.9L351.7 456.2M322.7 457.9L306.2 475.8M322.7 457.9L334.6 478.3M322.7 457.9L301.2 460.1M322.7 457.9L319.8 450.3M351.7 456.2L375.1 454.2M351.7 456.2L334.6 478.3M351.7 456.2L365.7 476.8M375.1 454.2L401.5 456.6M375.1 454.2L365.7 476.8M375.1 454.2L392.6 480.0M401.5 456.6L430.7 456.7M401.5 456.6L392.6 480.0M401.5 456.6L419.7 476.3M430.7 456.7L419.7 476.3M306.2 475.8L334.6 478.3M306.2 475.8L325.0 501.0M306.2 475.8L301.2 460.1M334.6 478.3L365.7 476.8M334.6 478.3L325.0 501.0M334.6 478.3L351.0 499.1M365.7 476.8L392.6 480.0M365.7 476.8L351.0 499.1M365.7 476.8L374.6 501.0M392.6 480.0L419.7 476.3M392.6 480.0L374.6 501.0M392.6 480.0L402.5 501.1M419.7 476.3L402.5 501.1M325.0 501.0L351.0 499.1M325.0 501.0L333.8 518.5M351.0 499.1L374.6 501.0M351.0 499.1L333.8 518.5M351.0 499.1L365.8 522.3M374.6 501.0L402.5 501.1M374.6 501.0L365.8 522.3M374.6 501.0L390.2 524.0M402.5 501.1L390.2 524.0M402.5 501.1L416.6 523.6M333.8 518.5L365.8 522.3M333.8 518.5L323.0 546.0M333.8 518.5L349.0 546.0M365.8 522.3L390.2 524.0M365.8 522.3L349.0 546.0M365.8 522.3L376.5 543.7M390.2 524.0L416.6 523.6M390.2 524.0L376.5 543.7M390.2 524.0L403.6 540.7M416.6 523.6L403.6 540.7M323.0 546.0L349.0 546.0M349.0 546.0L376.5 543.7M376.5 543.7L403.6 540.7M346.9 402.1L337.9 391.2M346.9 402.1L336.1 402.0M337.9 391.2L322.1 391.7M337.9 391.2L336.1 402.0M274.7 418.3L278.2 417.4M274.7 418.3L281.2 407.3M274.7 418.3L265.6 408.5M274.7 418.3L273.2 402.6M274.7 418.3L280.7 421.3M270.4 400.4L265.6 408.5M270.4 400.4L273.2 402.6M270.4 400.4L268.4 397.0M277.6 442.7L299.0 422.4M277.6 442.7L280.7 421.3M322.1 391.7L336.1 402.0M322.1 391.7L330.8 404.8M299.0 422.4L312.8 418.2M299.0 422.4L303.9 409.2M299.0 422.4L291.5 406.1M299.0 422.4L280.7 421.3M278.2 417.4L281.2 407.3M278.2 417.4L280.7 421.3M309.4 409.2L312.8 418.2M309.4 409.2L303.9 409.2M309.4 409.2L310.4 400.2M281.2 407.3L273.2 402.6M281.2 407.3L291.5 406.1M281.2 407.3L280.7 421.3M312.8 418.2L318.9 424.6M312.8 418.2L324.6 416.9M312.8 418.2L303.9 409.2M265.6 408.5L273.2 402.6M318.9 424.6L314.2 441.3M318.9 424.6L324.6 416.9M318.9 424.6L328.5 428.0M301.2 460.1L314.2 441.3M301.2 460.1L319.8 450.3M336.1 402.0L330.8 404.8M314.2 441.3L319.8 450.3M314.2 441.3L328.5 428.0M324.6 416.9L330.8 404.8M324.6 416.9L328.5 428.0M303.9 409.2L310.4 400.2M303.9 409.2L291.5 406.1M291.5 406.1L280.7 421.3" fill="none" stroke="#179b19" stroke-width="1.700" stroke-linecap="round"/>
<g clip-path="url(#mc)"><path d="M297.8 402.5Q307.3 415.9 346.2 388.4M279.4 419.3Q300.4 415.8 342.0 401.6M290.0 424.7Q287.4 398.2 333.0 386.3M268.4 429.1Q288.8 416.0 328.2 381.9M295.6 426.2Q298.2 406.5 329.0 383.8M271.4 416.7Q328.8 408.7 328.4 401.1M274.3 438.6Q285.0 404.5 329.9 386.6M282.1 419.1Q285.2 401.6 326.4 390.1M269.1 414.8Q298.7 400.8 321.3 378.5M285.9 420.2Q317.2 417.0 344.0 393.8M279.2 411.7Q317.6 411.1 351.5 381.6M267.5 433.1Q318.0 415.3 348.5 393.1M275.9 451.0L322.7 407.5M294.5 463.1L326.3 408.4M291.1 457.7L310.3 395.5M275.7 444.4L304.7 407.5M287.6 455.1L328.2 405.2M285.7 430.1L335.9 406.2M286.1 451.4L329.7 396.0M292.6 440.1L303.4 399.0" fill="none" stroke="#179b19" stroke-width="1.800" stroke-linecap="round"/>
<path d="M358.0 352.0Q470.0 318.0 537.6 488.7M362.0 346.0Q471.2 330.0 537.6 488.7M356.0 358.0Q472.4 342.0 537.6 488.7M380.0 372.0Q473.6 366.0 537.6 488.7M398.0 384.0Q474.8 380.0 537.6 488.7M420.0 392.0Q476.0 392.0 537.6 488.7M436.0 404.0Q477.2 402.0 537.6 488.7M452.0 414.0Q478.4 412.0 537.6 488.7M372.0 330.0Q489.6 322.0 537.6 488.7M392.0 322.0Q490.8 318.0 537.6 488.7" fill="none" stroke="#179b19" stroke-width="1.600" stroke-linecap="round"/></g>
<path d="M484 421Q506 436 537.600 488.700" fill="none" stroke="#189018" stroke-width="4.500" stroke-linecap="round"/>
<path d="M268 400Q300 412 336 384Q352 370 362 348" fill="none" stroke="#1a961b" stroke-width="3.500" stroke-linecap="round"/>
<path d="M266.0 396.0L283.0 402.0L299.0 403.0L321.0 392.0L340.0 379.0L349.0 368.0L356.0 357.0L361.0 347.0L372.0 329.0L392.0 310.0L421.0 305.5L448.0 314.0L468.0 338.0L484.0 367.0L495.6 399.6L502.6 406.6L519.0 414.8L527.0 432.0L531.0 456.8L537.6 488.7L514.0 455.6L500.0 434.6L491.0 425.0L483.0 423.0L477.0 430.0L465.0 448.6L446.6 482.4L428.0 520.0L409.0 569.0L383.3 569.0L358.3 567.5L334.7 562.5L313.0 554.0L302.5 513.0L290.0 476.0L275.0 456.7L270.0 431.7L264.0 408.0Z" fill="none" stroke="#179b19" stroke-width="1.800" stroke-linejoin="round"/>
<path d="M263.2 393.2l5.6 5.6M268.8 393.2l-5.6 5.6M262.5 396.0h7M266.0 392.5v7M280.2 399.2l5.6 5.6M285.8 399.2l-5.6 5.6M279.5 402.0h7M283.0 398.5v7M296.2 400.2l5.6 5.6M301.8 400.2l-5.6 5.6M295.5 403.0h7M299.0 399.5v7M318.2 389.2l5.6 5.6M323.8 389.2l-5.6 5.6M317.5 392.0h7M321.0 388.5v7M337.2 376.2l5.6 5.6M342.8 376.2l-5.6 5.6M336.5 379.0h7M340.0 375.5v7M346.2 365.2l5.6 5.6M351.8 365.2l-5.6 5.6M345.5 368.0h7M349.0 364.5v7M353.2 354.2l5.6 5.6M358.8 354.2l-5.6 5.6M352.5 357.0h7M356.0 353.5v7M358.2 344.2l5.6 5.6M363.8 344.2l-5.6 5.6M357.5 347.0h7M361.0 343.5v7M369.2 326.2l5.6 5.6M374.8 326.2l-5.6 5.6M368.5 329.0h7M372.0 325.5v7M389.2 307.2l5.6 5.6M394.8 307.2l-5.6 5.6M388.5 310.0h7M392.0 306.5v7M418.2 302.7l5.6 5.6M423.8 302.7l-5.6 5.6M417.5 305.5h7M421.0 302.0v7M445.2 311.2l5.6 5.6M450.8 311.2l-5.6 5.6M444.5 314.0h7M448.0 310.5v7M465.2 335.2l5.6 5.6M470.8 335.2l-5.6 5.6M464.5 338.0h7M468.0 334.5v7M481.2 364.2l5.6 5.6M486.8 364.2l-5.6 5.6M480.5 367.0h7M484.0 363.5v7M492.8 396.8l5.6 5.6M498.4 396.8l-5.6 5.6M492.1 399.6h7M495.6 396.1v7M499.8 403.8l5.6 5.6M505.4 403.8l-5.6 5.6M499.1 406.6h7M502.6 403.1v7M516.2 412.0l5.6 5.6M521.8 412.0l-5.6 5.6M515.5 414.8h7M519.0 411.3v7M524.2 429.2l5.6 5.6M529.8 429.2l-5.6 5.6M523.5 432.0h7M527.0 428.5v7M528.2 454.0l5.6 5.6M533.8 454.0l-5.6 5.6M527.5 456.8h7M531.0 453.3v7M534.8 485.9l5.6 5.6M540.4 485.9l-5.6 5.6M534.1 488.7h7M537.6 485.2v7M511.2 452.8l5.6 5.6M516.8 452.8l-5.6 5.6M510.5 455.6h7M514.0 452.1v7M497.2 431.8l5.6 5.6M502.8 431.8l-5.6 5.6M496.5 434.6h7M500.0 431.1v7M488.2 422.2l5.6 5.6M493.8 422.2l-5.6 5.6M487.5 425.0h7M491.0 421.5v7M480.2 420.2l5.6 5.6M485.8 420.2l-5.6 5.6M479.5 423.0h7M483.0 419.5v7M474.2 427.2l5.6 5.6M479.8 427.2l-5.6 5.6M473.5 430.0h7M477.0 426.5v7M462.2 445.8l5.6 5.6M467.8 445.8l-5.6 5.6M461.5 448.6h7M465.0 445.1v7M443.8 479.6l5.6 5.6M449.4 479.6l-5.6 5.6M443.1 482.4h7M446.6 478.9v7M425.2 517.2l5.6 5.6M430.8 517.2l-5.6 5.6M424.5 520.0h7M428.0 516.5v7M406.2 566.2l5.6 5.6M411.8 566.2l-5.6 5.6M405.5 569.0h7M409.0 565.5v7M380.5 566.2l5.6 5.6M386.1 566.2l-5.6 5.6M379.8 569.0h7M383.3 565.5v7M355.5 564.7l5.6 5.6M361.1 564.7l-5.6 5.6M354.8 567.5h7M358.3 564.0v7M331.9 559.7l5.6 5.6M337.5 559.7l-5.6 5.6M331.2 562.5h7M334.7 559.0v7M310.2 551.2l5.6 5.6M315.8 551.2l-5.6 5.6M309.5 554.0h7M313.0 550.5v7M299.7 510.2l5.6 5.6M305.3 510.2l-5.6 5.6M299.0 513.0h7M302.5 509.5v7M287.2 473.2l5.6 5.6M292.8 473.2l-5.6 5.6M286.5 476.0h7M290.0 472.5v7M272.2 453.9l5.6 5.6M277.8 453.9l-5.6 5.6M271.5 456.7h7M275.0 453.2v7M267.2 428.9l5.6 5.6M272.8 428.9l-5.6 5.6M266.5 431.7h7M270.0 428.2v7M261.2 405.2l5.6 5.6M266.8 405.2l-5.6 5.6M260.5 408.0h7M264.0 404.5v7M401.0 316.7l5.6 5.6M406.6 316.7l-5.6 5.6M400.3 319.5h7M403.8 316.0v7M425.1 317.6l5.6 5.6M430.7 317.6l-5.6 5.6M424.4 320.4h7M427.9 316.9v7M385.1 341.4l5.6 5.6M390.7 341.4l-5.6 5.6M384.4 344.2h7M387.9 340.7v7M411.4 342.5l5.6 5.6M417.0 342.5l-5.6 5.6M410.7 345.3h7M414.2 341.8v7M442.8 341.9l5.6 5.6M448.4 341.9l-5.6 5.6M442.1 344.7h7M445.6 341.2v7M375.6 362.3l5.6 5.6M381.2 362.3l-5.6 5.6M374.9 365.1h7M378.4 361.6v7M400.0 364.6l5.6 5.6M405.6 364.6l-5.6 5.6M399.3 367.4h7M402.8 363.9v7M424.8 363.4l5.6 5.6M430.4 363.4l-5.6 5.6M424.1 366.2h7M427.6 362.7v7M452.7 361.3l5.6 5.6M458.3 361.3l-5.6 5.6M452.0 364.1h7M455.5 360.6v7M359.4 388.1l5.6 5.6M365.0 388.1l-5.6 5.6M358.7 390.9h7M362.2 387.4v7M389.9 383.7l5.6 5.6M395.5 383.7l-5.6 5.6M389.2 386.5h7M392.7 383.0v7M412.3 384.2l5.6 5.6M417.9 384.2l-5.6 5.6M411.6 387.0h7M415.1 383.5v7M439.6 385.7l5.6 5.6M445.2 385.7l-5.6 5.6M438.9 388.5h7M442.4 385.0v7M468.7 384.3l5.6 5.6M474.3 384.3l-5.6 5.6M468.0 387.1h7M471.5 383.6v7M320.8 405.2l5.6 5.6M326.4 405.2l-5.6 5.6M320.1 408.0h7M323.6 404.5v7M349.1 409.6l5.6 5.6M354.7 409.6l-5.6 5.6M348.4 412.4h7M351.9 408.9v7M375.9 409.7l5.6 5.6M381.5 409.7l-5.6 5.6M375.2 412.5h7M378.7 409.0v7M400.1 407.3l5.6 5.6M405.7 407.3l-5.6 5.6M399.4 410.1h7M402.9 406.6v7M425.3 408.7l5.6 5.6M430.9 408.7l-5.6 5.6M424.6 411.5h7M428.1 408.0v7M452.1 405.3l5.6 5.6M457.7 405.3l-5.6 5.6M451.4 408.1h7M454.9 404.6v7M480.0 405.9l5.6 5.6M485.6 405.9l-5.6 5.6M479.3 408.7h7M482.8 405.2v7M306.9 427.9l5.6 5.6M312.5 427.9l-5.6 5.6M306.2 430.7h7M309.7 427.2v7M331.7 429.1l5.6 5.6M337.3 429.1l-5.6 5.6M331.0 431.9h7M334.5 428.4v7M359.4 427.8l5.6 5.6M365.0 427.8l-5.6 5.6M358.7 430.6h7M362.2 427.1v7M389.3 433.0l5.6 5.6M394.9 433.0l-5.6 5.6M388.6 435.8h7M392.1 432.3v7M414.0 429.9l5.6 5.6M419.6 429.9l-5.6 5.6M413.3 432.7h7M416.8 429.2v7M438.7 427.7l5.6 5.6M444.3 427.7l-5.6 5.6M438.0 430.5h7M441.5 427.0v7M293.0 449.3l5.6 5.6M298.6 449.3l-5.6 5.6M292.3 452.1h7M295.8 448.6v7M319.9 455.1l5.6 5.6M325.5 455.1l-5.6 5.6M319.2 457.9h7M322.7 454.4v7M348.9 453.4l5.6 5.6M354.5 453.4l-5.6 5.6M348.2 456.2h7M351.7 452.7v7M372.3 451.4l5.6 5.6M377.9 451.4l-5.6 5.6M371.6 454.2h7M375.1 450.7v7M398.7 453.8l5.6 5.6M404.3 453.8l-5.6 5.6M398.0 456.6h7M401.5 453.1v7M427.9 453.9l5.6 5.6M433.5 453.9l-5.6 5.6M427.2 456.7h7M430.7 453.2v7M303.4 473.0l5.6 5.6M309.0 473.0l-5.6 5.6M302.7 475.8h7M306.2 472.3v7M331.8 475.5l5.6 5.6M337.4 475.5l-5.6 5.6M331.1 478.3h7M334.6 474.8v7M362.9 474.0l5.6 5.6M368.5 474.0l-5.6 5.6M362.2 476.8h7M365.7 473.3v7M389.8 477.2l5.6 5.6M395.4 477.2l-5.6 5.6M389.1 480.0h7M392.6 476.5v7M416.9 473.5l5.6 5.6M422.5 473.5l-5.6 5.6M416.2 476.3h7M419.7 472.8v7M322.2 498.2l5.6 5.6M327.8 498.2l-5.6 5.6M321.5 501.0h7M325.0 497.5v7M348.2 496.3l5.6 5.6M353.8 496.3l-5.6 5.6M347.5 499.1h7M351.0 495.6v7M371.8 498.2l5.6 5.6M377.4 498.2l-5.6 5.6M371.1 501.0h7M374.6 497.5v7M399.7 498.3l5.6 5.6M405.3 498.3l-5.6 5.6M399.0 501.1h7M402.5 497.6v7M331.0 515.7l5.6 5.6M336.6 515.7l-5.6 5.6M330.3 518.5h7M333.8 515.0v7M363.0 519.5l5.6 5.6M368.6 519.5l-5.6 5.6M362.3 522.3h7M365.8 518.8v7M387.4 521.2l5.6 5.6M393.0 521.2l-5.6 5.6M386.7 524.0h7M390.2 520.5v7M413.8 520.8l5.6 5.6M419.4 520.8l-5.6 5.6M413.1 523.6h7M416.6 520.1v7M320.2 543.2l5.6 5.6M325.8 543.2l-5.6 5.6M319.5 546.0h7M323.0 542.5v7M346.2 543.2l5.6 5.6M351.8 543.2l-5.6 5.6M345.5 546.0h7M349.0 542.5v7M373.7 540.9l5.6 5.6M379.3 540.9l-5.6 5.6M373.0 543.7h7M376.5 540.2v7M400.8 537.9l5.6 5.6M406.4 537.9l-5.6 5.6M400.1 540.7h7M403.6 537.2v7M344.1 399.3l5.6 5.6M349.7 399.3l-5.6 5.6M343.4 402.1h7M346.9 398.6v7M335.1 388.4l5.6 5.6M340.7 388.4l-5.6 5.6M334.4 391.2h7M337.9 387.7v7M271.9 415.5l5.6 5.6M277.5 415.5l-5.6 5.6M271.2 418.3h7M274.7 414.8v7M267.6 397.6l5.6 5.6M273.2 397.6l-5.6 5.6M266.9 400.4h7M270.4 396.9v7M274.8 439.9l5.6 5.6M280.4 439.9l-5.6 5.6M274.1 442.7h7M277.6 439.2v7M319.3 388.9l5.6 5.6M324.9 388.9l-5.6 5.6M318.6 391.7h7M322.1 388.2v7M296.2 419.6l5.6 5.6M301.8 419.6l-5.6 5.6M295.5 422.4h7M299.0 418.9v7M275.4 414.6l5.6 5.6M281.0 414.6l-5.6 5.6M274.7 417.4h7M278.2 413.9v7M306.6 406.4l5.6 5.6M312.2 406.4l-5.6 5.6M305.9 409.2h7M309.4 405.7v7M278.4 404.5l5.6 5.6M284.0 404.5l-5.6 5.6M277.7 407.3h7M281.2 403.8v7M310.0 415.4l5.6 5.6M315.6 415.4l-5.6 5.6M309.3 418.2h7M312.8 414.7v7M262.8 405.7l5.6 5.6M268.4 405.7l-5.6 5.6M262.1 408.5h7M265.6 405.0v7M316.1 421.8l5.6 5.6M321.7 421.8l-5.6 5.6M315.4 424.6h7M318.9 421.1v7M270.4 399.8l5.6 5.6M276.0 399.8l-5.6 5.6M269.7 402.6h7M273.2 399.1v7M298.4 457.3l5.6 5.6M304.0 457.3l-5.6 5.6M297.7 460.1h7M301.2 456.6v7M333.3 399.2l5.6 5.6M338.9 399.2l-5.6 5.6M332.6 402.0h7M336.1 398.5v7M311.4 438.5l5.6 5.6M317.0 438.5l-5.6 5.6M310.7 441.3h7M314.2 437.8v7M321.8 414.1l5.6 5.6M327.4 414.1l-5.6 5.6M321.1 416.9h7M324.6 413.4v7M317.0 447.5l5.6 5.6M322.6 447.5l-5.6 5.6M316.3 450.3h7M319.8 446.8v7M301.1 406.4l5.6 5.6M306.7 406.4l-5.6 5.6M300.4 409.2h7M303.9 405.7v7M307.6 397.4l5.6 5.6M313.2 397.4l-5.6 5.6M306.9 400.2h7M310.4 396.7v7M265.6 394.2l5.6 5.6M271.2 394.2l-5.6 5.6M264.9 397.0h7M268.4 393.5v7M288.7 403.3l5.6 5.6M294.3 403.3l-5.6 5.6M288.0 406.1h7M291.5 402.6v7M328.0 402.0l5.6 5.6M333.6 402.0l-5.6 5.6M327.3 404.8h7M330.8 401.3v7M325.7 425.2l5.6 5.6M331.3 425.2l-5.6 5.6M325.0 428.0h7M328.5 424.5v7M277.9 418.5l5.6 5.6M283.5 418.5l-5.6 5.6M277.2 421.3h7M280.7 417.8v7" fill="none" stroke="#149614" stroke-width="1.800"/>
<!-- cursor -->
<g transform="translate(363,477)" fill="none"><ellipse cx="0" cy="0" rx="7.500" ry="2.600" transform="rotate(-8)" stroke="#6a6a60" stroke-width="1.600"/><ellipse cx="0" cy="0" rx="7.500" ry="2.600" transform="rotate(-8)" stroke="#e8eee8" stroke-width="0.800"/><ellipse cx="-0.500" cy="0.500" rx="2.600" ry="8.500" transform="rotate(14)" stroke="#6a6a60" stroke-width="1.600"/><ellipse cx="-0.500" cy="0.500" rx="2.600" ry="8.500" transform="rotate(14)" stroke="#e8eee8" stroke-width="0.800"/><path d="M-6 1.200l5.500-2.200l-1 5z M2-7.500l2.800 5.500h-5z" fill="#fff" stroke="#555" stroke-width="0.400"/><path d="M1.800-2v6" stroke="#fff" stroke-width="1.200"/></g>
<!-- axes -->
<g fill="none" stroke="#6b707a" stroke-width="1"><path d="M85.500 791v22.500M85.500 812.600l23.500-1.900M85.500 813.500l2.600 11"/></g>
<g font-family="Liberation Sans,sans-serif" font-size="9.500" fill="#666b75"><text x="87.500" y="791">z</text><text x="111.500" y="810">y</text><text x="89.500" y="825.500">x</text></g>
</svg>
<!-- viewport tabs -->
<style>
.vtab{position:absolute;top:844px;height:16px;letter-spacing:0.050px;font-size:9.500px;line-height:17px;color:#222;text-align:center;background:#dcdcdf;border-radius:0 0 4px 4px}
.os{position:absolute;top:868.300px;width:10.500px;height:10.500px;background:#fff;border:1px solid #333}
.os.dis{border-color:#b9b9bd;background:#ececee}
.osl{position:absolute;top:870.300px;font-size:9.500px;line-height:1;color:#222;white-space:nowrap;letter-spacing:0px}
.st{position:absolute;top:887px;font-size:9.500px;line-height:1;color:#222;white-space:nowrap;letter-spacing:0px}
.sep{position:absolute;top:883px;width:1px;height:17px;background:#d0d0d4}
</style>
<div class="abs" style="left:55px;top:843px;width:184px;height:18px;background:#f3f3f5;border-radius:0 0 4px 4px"></div>
<div class="vtab" style="left:58px;width:57px;background:#fbfbfc;box-shadow:0 1px 1px #bbb">Perspective</div>
<div class="vtab" style="left:120px;width:25px">Top</div>
<div class="vtab" style="left:149px;width:32px">Front</div>
<div class="vtab" style="left:185px;width:31px">Right</div>
<svg style="left:224px;top:848px" width="9" height="9" viewBox="0 0 9 9"><path d="M3 0.500h3v2.500h2.500v3h-2.500v2.500h-3v-2.500h-2.500v-3h2.500z" fill="#fff" stroke="#888" stroke-width="0.800"/></svg>
<!-- osnap -->
<div class="os" style="left:8px"></div><div class="osl" style="left:22px">End</div>
<div class="os ck" style="left:44px"></div><div class="osl" style="left:58px">Near</div>
<div class="os ck" style="left:84.500px"></div><div class="osl" style="left:98px">Point</div>
<div class="os ck" style="left:127px"></div><div class="osl" style="left:141px">Mid</div>
<div class="os" style="left:163.500px"></div><div class="osl" style="left:177px">Cen</div>
<div class="os ck" style="left:200px"></div><div class="osl" style="left:214px">Int</div>
<div class="os ck" style="left:231px"></div><div class="osl" style="left:245px">Perp</div>
<div class="os" style="left:270px"></div><div class="osl" style="left:284px">Tan</div>
<div class="os ck" style="left:305px"></div><div class="osl" style="left:319px">Quad</div>
<div class="os" style="left:349px"></div><div class="osl" style="left:362.500px">Knot</div>
<div class="os ck" style="left:388px"></div><div class="osl" style="left:402px">Vertex</div>
<div class="os dis" style="left:436px;width:9.500px;height:9.500px;top:868.800px"></div><div class="osl" style="left:449px">Project</div>
<div class="os dis" style="left:492.500px;width:9.500px;height:9.500px;top:868.800px"></div><div class="osl" style="left:505px">Disable</div>
<svg style="left:0;top:867.800px" width="420" height="12" viewBox="0 866 420 12" fill="none" stroke="#222" stroke-width="1.100"><path d="M46 872l2.500 2.800l4.500-6M86.500 872l2.500 2.800l4.500-6M129 872l2.500 2.800l4.500-6M202 872l2.500 2.800l4.500-6M233 872l2.500 2.800l4.500-6M307 872l2.500 2.800l4.500-6M390 872l2.500 2.800l4.500-6"/></svg>
<!-- status bar -->
<div class="abs" style="left:0;top:881.800px;width:799px;height:18.200px;background:#f0f0f4;border-top:1px solid #d8d8dd"></div>
<div class="abs" style="left:543px;top:883px;width:134px;height:16px;background:#e9f1fb"></div>
<div class="sep" style="left:37px"></div><div class="sep" style="left:103px"></div><div class="sep" style="left:170px"></div><div class="sep" style="left:235px"></div><div class="sep" style="left:300px"></div><div class="sep" style="left:426px"></div><div class="sep" style="left:474px"></div><div class="sep" style="left:507px"></div><div class="sep" style="left:542px"></div><div class="sep" style="left:578px"></div><div class="sep" style="left:633px"></div><div class="sep" style="left:677px"></div><div class="sep" style="left:745px"></div><div class="sep" style="left:775px"></div>
<div class="st" style="left:4px">CPlane</div>
<div class="st" style="left:48px">x 9979.114</div>
<div class="st" style="left:112px">y -4208.145</div>
<div class="st" style="left:188px">z 0.000</div>
<div class="st" style="left:244px">Millimeters</div>
<div class="abs" style="left:304px;top:886px;width:11px;height:11px;background:#000"></div>
<div class="st" style="left:318px">Default</div>
<div class="st" style="left:429px">Grid Snap</div>
<div class="st" style="left:479px">Ortho</div>
<div class="st" style="left:511px">Planar</div>
<div class="st" style="left:547px;font-weight:bold">Osnap</div>
<div class="st" style="left:580px;font-weight:bold">SmartTrack</div>
<div class="st" style="left:636px;font-weight:bold">Gumball</div>
<div class="st" style="left:679px">Record History</div>
<div class="st" style="left:750px">Filter</div>
<div class="st" style="left:777px;width:6px;overflow:hidden">A</div>
<!-- window borders -->
<div class="abs" style="left:0;top:0;width:1.200px;height:900px;background:#2a2a2c"></div>
<div class="abs" style="left:0;top:898.500px;width:799px;height:1.500px;background:#3a3a3c"></div>
</div>
<div class="abs" style="left:797.500px;top:1px;width:1.500px;height:898px;background:#dadae8"></div>
<div id="divider"></div>
<div id="gh"><div class="abs" id="ghi" style="left:-801px;top:0;width:1600px;height:900px">
<style>
.gm{position:absolute;top:33px;font-size:9.400px;line-height:1;color:#1c1c1c;white-space:nowrap;-webkit-text-stroke:0.330px #1c1c1c;letter-spacing:0.100px}
.gt{position:absolute;top:54px;font-size:9.500px;line-height:1;color:#7c7c7c;white-space:nowrap;transform:scaleX(0.965);transform-origin:0 0}
</style>
<!-- title -->
<div class="abs" style="left:801px;top:0;width:799px;height:25.500px;background:#fff"></div>
<div class="abs" style="left:801px;top:0;width:799px;height:1px;background:#3a3a3c"></div>
<div class="t" style="left:807.500px;top:9px;font-size:9.100px;letter-spacing:0.250px;color:#8e8e8e">Grasshopper - asdasdasfasdfsdfgs*</div>
<svg style="left:1490px;top:0" width="108" height="25" viewBox="0 0 108 25" fill="none" stroke="#9a9a9a" stroke-width="1"><path d="M10 12.500H18.500"/><rect x="47.300" y="8.300" width="8.600" height="8.400" rx="0.800"/><path d="M85.600 8L94 16.700M94 8L85.600 16.700"/></svg>
<!-- menu -->
<div class="abs" style="left:801px;top:25.500px;width:799px;height:41.500px;background:#f1f1f4"></div>
<div class="gm" style="left:811.500px">File</div>
<div class="gm" style="left:842.500px">Edit</div>
<div class="gm" style="left:875px">View</div>
<div class="gm" style="left:912px">Display</div>
<div class="gm" style="left:959px">Solution</div>
<div class="gm" style="left:1012px">Help</div>
<div class="gm" style="left:1577.500px">fgs</div>
<!-- tabs -->
<div class="gt" style="left:808.500px">Prm</div>
<div class="gt" style="left:838.500px">Math</div>
<div class="gt" style="left:872.500px">Set</div>
<div class="gt" style="left:901px">Vec</div>
<div class="gt" style="left:929.500px">Crv</div>
<div class="gt" style="left:958px">Srf</div>
<div class="gt" style="left:984.500px">Msh</div>
<div class="gt" style="left:1016.500px">Int</div>
<div class="gt" style="left:1040px">Trns</div>
<div class="gt" style="left:1072px">Dis</div>
<div class="gt" style="left:1100.500px">Ladybug</div>
<div class="gt" style="left:1150.500px">Honeybee</div>
<div class="gt" style="left:1207.500px">Squid (ShapeDiver edition)</div>
<div class="gt" style="left:1333.500px">ShapeDiver</div>
<div class="gt" style="left:1397px">Kangaroo2</div>
<!-- ribbon background -->
<div class="abs" style="left:800px;top:66.500px;width:797px;height:66.500px;background:#ececee;border:1px solid #c4c4c8;border-radius:4px"></div>
<div class="abs" style="left:1325px;top:45px;width:168.500px;height:22px;border:1px solid #cdcdd1;border-left:none;border-top:none;border-radius:0 0 6px 0"></div>
<div class="abs" style="left:1517.500px;top:45px;width:76px;height:22px;border:1px solid #cdcdd1;border-top:none;border-radius:0 0 6px 6px"></div>
<!-- ribbon panels -->
<style>.pn{position:absolute;top:69px;height:60.500px;border:1px solid #8f8f8f;border-radius:4px;background:linear-gradient(#e9e9e9,#dadada);overflow:hidden}.pn i{position:absolute;left:0;right:0;bottom:0;height:11px;background:#262626}.pl{position:absolute;top:119.700px;font-size:9.200px;line-height:1;color:#fff;-webkit-text-stroke:0.250px #fff;text-align:center;white-space:nowrap;letter-spacing:-0.250px}.pp{position:absolute;top:120px;font-size:8.500px;line-height:1;color:#9a9a9a;font-weight:bold}</style>
<div class="pn" style="left:803.00px;width:74.25px"><i></i></div>
<div class="pl" style="left:803.50px;width:63.75px">Goals-6dof</div>
<div class="pp" style="left:868.25px">+</div>
<div class="pn" style="left:880.00px;width:73.75px"><i></i></div>
<div class="pl" style="left:880.50px;width:63.25px">Goals-Angle</div>
<div class="pp" style="left:944.75px">+</div>
<div class="pn" style="left:956.50px;width:50.50px"><i></i></div>
<div class="pl" style="left:957.00px;width:50.00px">Goals-Co</div>
<div class="pn" style="left:1010.00px;width:73.75px"><i></i></div>
<div class="pl" style="left:1010.50px;width:63.25px">Goals-Col</div>
<div class="pp" style="left:1074.75px">+</div>
<div class="pn" style="left:1086.50px;width:74.00px"><i></i></div>
<div class="pl" style="left:1087.00px;width:63.50px">Goals-Lin</div>
<div class="pp" style="left:1151.50px">+</div>
<div class="pn" style="left:1163.25px;width:73.75px"><i></i></div>
<div class="pl" style="left:1163.75px;width:63.25px">Goals-Mesh</div>
<div class="pp" style="left:1228.00px">+</div>
<div class="pn" style="left:1240.00px;width:50.50px"><i></i></div>
<div class="pl" style="left:1240.50px;width:50.00px">Goals-On</div>
<div class="pn" style="left:1293.25px;width:73.75px"><i></i></div>
<div class="pl" style="left:1293.75px;width:63.25px">Goals-Pt</div>
<div class="pp" style="left:1358.00px">+</div>
<div class="pn" style="left:1370.00px;width:73.75px"><i></i></div>
<div class="pl" style="left:1370.50px;width:63.25px">Main</div>
<div class="pp" style="left:1434.75px">+</div>
<div class="pn" style="left:1446.50px;width:74.00px"><i></i></div>
<div class="pl" style="left:1447.00px;width:63.50px">Mesh</div>
<div class="pp" style="left:1511.50px">+</div>
<div class="pn" style="left:1523.25px;width:50.50px"><i></i></div>
<div class="pl" style="left:1523.75px;width:40.00px">Utility</div>
<div class="pp" style="left:1564.75px">+</div>
<svg style="left:0;top:0" width="1600" height="135" viewBox="0 0 1600 135"><g transform="translate(816,82)"><rect x="-8" y="-4.5" width="4.5" height="10.5" fill="#2a5ae8"/><rect x="-2" y="-4" width="8" height="7.5" fill="#f0861a"/><path d="M-8.5-5h15.500" stroke="#2a3ac8" stroke-width="1" stroke-dasharray="1.500 1"/></g><g transform="translate(840,82)"><circle r="7.500" fill="#fff" stroke="#1c1c1c" stroke-width="1"/><circle r="4.800" fill="#2aa6e8" stroke="#0a5aa8" stroke-width="0.800"/></g><g transform="translate(864,82)"><circle cx="-7" cy="-7.5" r="1.3" fill="#1c1c1c"/><circle cx="5" cy="-6.5" r="1.3" fill="#1c1c1c"/><circle cx="-6" cy="-1" r="1.3" fill="#1c1c1c"/><circle cx="8" cy="3" r="1.3" fill="#1c1c1c"/><circle cx="-7.5" cy="6" r="1.3" fill="#1c1c1c"/><circle cx="-4" cy="5" r="1.3" fill="#1c1c1c"/><path d="M-1.500-4v5.500h4.500" stroke="#c66" stroke-width="0.900" fill="none"/></g><g transform="translate(816,106)"><path d="M-8 2l10-6.500l6 1.500v5l-10 6.500l-6-1.500z" fill="#8a3208" stroke="#3a1400" stroke-width="0.700"/><path d="M-8 2l10-6.500l6 1.500l-10 6.500z" fill="#c8581a"/><path d="M-8.500 3h5v1.500h-1.500v3h1.500v1.500h-5v-1.500h1.500v-3h-1.500z" fill="#f4c020" stroke="#3a1400" stroke-width="0.500"/></g><g transform="translate(840,106)"><ellipse cx="0" cy="4" rx="8.500" ry="4" fill="#2aa6e8" stroke="#0a6ab8" stroke-width="0.600"/><ellipse cx="0" cy="2.500" rx="4" ry="2" fill="#5ac4f4"/><path d="M-0.500 2.500l-1.500-10" stroke="#2a78dc" stroke-width="2.200" stroke-linecap="round"/></g><g transform="translate(864,106)"><path d="M-7-3l6-5.500l7 5l-5 6z" fill="#d04a10"/><path d="M-4 3l8-3l5 4l-8 5.500z" fill="#2aa6e8"/><path d="M1-1l1.200 2.200l2.400 0.300l-1.800 1.600l0.500 2.400l-2.300-1.300l-2.200 1.300l0.500-2.400l-1.800-1.600l2.400-0.300z" fill="#f4e23a"/></g><g transform="translate(893,82)"><path d="M-7-3q6-3 10 4M-5 1q6 5 11 3" stroke="#2aa6e8" stroke-width="2" fill="none"/><path d="M-8-6.500l9 2.500l6 9.500" stroke="#1c1c1c" stroke-width="1.200" fill="none"/><circle cx="-8" cy="-6.5" r="1.3" fill="#1c1c1c"/><circle cx="1" cy="-4" r="1.3" fill="#1c1c1c"/><circle cx="7" cy="5.5" r="1.3" fill="#1c1c1c"/></g><g transform="translate(917,82)"><path d="M-8-5h5v-2.500l4 4l-4 4v-2.500h-5zM8 4h-4v-2l-3.500 3.500l3.500 3.500v-2h4z" fill="#f0861a"/><path d="M0-9l-4 11l11-4.500" stroke="#1c1c1c" stroke-width="1.300" fill="none"/></g><g transform="translate(941,82)"><path d="M-9 3q3-4 7-5q3-5 7-6q3 5 3 13q-2-6-5-9q-4 1-7 5q-2 1-5 2z" fill="#f0a860" stroke="#8a4a10" stroke-width="0.800"/></g><g transform="translate(893,106)"><path d="M-8-5q9-4 15 9" stroke="#2aa6e8" stroke-width="3" fill="none"/><path d="M-10-3l3.500-5l3 4.500zM9 2l-1 6.500l-5-3z" fill="#2aa6e8"/><path d="M-7 0l3 3M-4 3.500l3 3M-1 6l3 2.500" stroke="#1c1c1c" stroke-width="1"/></g><g transform="translate(917,106)"><path d="M-8-5l6-3l-2 8l8 0l-7 7l8-2" stroke="#1c1c1c" stroke-width="1.200" fill="none"/><circle cx="-8" cy="-5" r="1.3" fill="#1c1c1c"/><circle cx="-2" cy="-8" r="1.3" fill="#1c1c1c"/><circle cx="-4" cy="0" r="1.3" fill="#1c1c1c"/><circle cx="4" cy="0" r="1.3" fill="#1c1c1c"/><circle cx="-3" cy="7" r="1.3" fill="#1c1c1c"/><circle cx="5" cy="5" r="1.3" fill="#1c1c1c"/><rect x="1" y="-5" width="3" height="3" fill="#888"/></g><g transform="translate(941,106)"><path d="M-8 7l2-8l8-6l6-1" stroke="#0a4a5a" stroke-width="1.300" fill="none"/><path d="M-5 0q4 2 6-5" stroke="#2aa6e8" stroke-width="1" fill="none"/><circle cx="-8" cy="7" r="1.3" fill="#1c1c1c"/><circle cx="-6" cy="-1" r="1.3" fill="#1c1c1c"/><circle cx="2" cy="-7" r="1.3" fill="#1c1c1c"/><circle cx="8" cy="-8" r="1.3" fill="#1c1c1c"/></g><g transform="translate(970,82)"><circle r="7" fill="none" stroke="#f0861a" stroke-width="1.300"/><circle cx="-7" cy="0" r="1.4" fill="#1c1c1c"/><circle cx="-3.5" cy="-6" r="1.4" fill="#1c1c1c"/><circle cx="3.5" cy="-6" r="1.4" fill="#1c1c1c"/><circle cx="7" cy="0" r="1.4" fill="#1c1c1c"/><circle cx="3.5" cy="6" r="1.4" fill="#1c1c1c"/></g><g transform="translate(994,82)"><path d="M-8-3l9-5l8 4l-9 6z" fill="#f0861a" stroke="#b85c08" stroke-width="0.600"/><circle cx="-3" cy="-2" r="1.3" fill="#1c1c1c"/><circle cx="2" cy="-4.5" r="1.3" fill="#1c1c1c"/><circle cx="3" cy="0" r="1.3" fill="#1c1c1c"/><circle cx="-6" cy="4" r="1.3" fill="#1c1c1c"/><circle cx="6" cy="4" r="1.3" fill="#1c1c1c"/><circle cx="0" cy="6" r="1.3" fill="#1c1c1c"/></g><g transform="translate(970,106)"><path d="M-9 6l18-11" stroke="#c98a50" stroke-width="1"/><circle cx="-6" cy="4" r="1.4" fill="#1c1c1c"/><circle cx="-2" cy="1.5" r="1.4" fill="#1c1c1c"/><circle cx="2" cy="-1" r="1.4" fill="#1c1c1c"/><circle cx="6" cy="-3.5" r="1.4" fill="#1c1c1c"/></g><g transform="translate(994,106)"><circle r="7" fill="#f0861a" stroke="#8a3a08" stroke-width="0.700"/><circle cx="-2" cy="-2" r="3" fill="#f8c060"/><circle cx="-4" cy="2" r="1.3" fill="#5a1a08"/><circle cx="1" cy="4" r="1.3" fill="#5a1a08"/><circle cx="4" cy="-1" r="1.3" fill="#5a1a08"/><circle cx="0" cy="-4" r="1.3" fill="#5a1a08"/><circle cx="5" cy="4" r="1.3" fill="#5a1a08"/></g><g transform="translate(1023,82)"><rect x="-9" y="1" width="18" height="6.500" rx="3.200" fill="#f0861a" stroke="#b85c08" stroke-width="0.600" transform="rotate(12)"/><circle cx="-1" cy="-4" r="5" fill="#2a78dc" stroke="#0a3a98" stroke-width="0.600"/></g><g transform="translate(1047,82)"><path d="M-9 0l6-6l8 6l-6 7z" fill="#2a78dc" stroke="#0a3a98" stroke-width="0.600"/><path d="M0-9v7M2-1h6" stroke="#1c1c1c" stroke-width="1.100"/><circle cx="8" cy="-1" r="1.5" fill="#1c1c1c"/></g><g transform="translate(1071,82)"><path d="M-8-1l8-3l8 3v5l-8 4l-8-4z" fill="#f0861a" stroke="#7a3a08" stroke-width="0.800"/><path d="M-8-1l8 4l8-4M0 3v5" stroke="#7a3a08" stroke-width="0.700" fill="none"/><path d="M-4-7l4 6l6-8" stroke="#1c1c1c" stroke-width="1" fill="none"/><circle cx="6" cy="-9" r="1.3" fill="#1c1c1c"/></g><g transform="translate(1023,106)"><path d="M-8-2l5-3l5 10l-4 3z" fill="#2a78dc" stroke="#0a3a98" stroke-width="0.500"/><path d="M1 4l3-11l5 1.500l-4 11z" fill="#2a78dc" stroke="#0a3a98" stroke-width="0.500"/><circle cx="-1" cy="1" r="2.200" fill="#f4e23a"/></g><g transform="translate(1047,106)"><rect x="-9" y="-9" width="18" height="18" fill="#1a4ab0"/><circle cx="-5" cy="-5" r="3" fill="#2a78dc"/><circle cx="1" cy="-5" r="3.2" fill="#f0861a"/><circle cx="6" cy="-6" r="2.5" fill="#2a78dc"/><circle cx="-5" cy="1" r="3" fill="#f0861a"/><circle cx="1" cy="2" r="3.5" fill="#f0861a"/><circle cx="6.2" cy="0" r="2.5" fill="#2a78dc"/><circle cx="-5.5" cy="6.2" r="2.5" fill="#f0861a"/><circle cx="0" cy="6.5" r="2.4" fill="#f0861a"/><circle cx="5.5" cy="5.5" r="3" fill="#f0861a"/></g><g transform="translate(1071,106)"><circle cx="-5" cy="-6" r="2.6" fill="#2a78dc" stroke="#333" stroke-width="0.400"/><circle cx="5.5" cy="-5" r="2.8" fill="#e8924a" stroke="#333" stroke-width="0.400"/><circle cx="0" cy="-2" r="2.5" fill="#e8924a" stroke="#333" stroke-width="0.400"/><circle cx="-5" cy="1" r="2.8" fill="#f0861a" stroke="#333" stroke-width="0.400"/><circle cx="2.5" cy="3" r="3" fill="#2a78dc" stroke="#333" stroke-width="0.400"/><circle cx="-6" cy="6.5" r="2.6" fill="#2a78dc" stroke="#333" stroke-width="0.400"/><circle cx="-0.5" cy="7" r="2.6" fill="#2a78dc" stroke="#333" stroke-width="0.400"/><circle cx="6" cy="7" r="2.5" fill="#e8924a" stroke="#333" stroke-width="0.400"/></g><g transform="translate(1100,82)"><path d="M-2-7v14M2-7v14" stroke="#1c1c1c" stroke-width="1.100"/><path d="M-10-2h4v-2.500l3.500 4.500l-3.500 4.500v-2.500h-4zM10-2h-4v-2.500l-3.500 4.500l3.500 4.500v-2.500h4z" fill="#f0861a"/></g><g transform="translate(1124,82)"><path d="M-6 7l11-14" stroke="#1c1c1c" stroke-width="1.800"/><path d="M-9-9l6 1l-4 4zM-3-5l4 3" fill="#f0861a" stroke="#f0861a" stroke-width="1.500"/><path d="M8 8l-6-1l4-4zM3 4l-4-3M5-8l-3 5M-3 8l3-4" fill="#2aa6e8" stroke="#2aa6e8" stroke-width="1.500"/><circle cx="-6" cy="7" r="1.3" fill="#1c1c1c"/><circle cx="5" cy="-7" r="1.3" fill="#1c1c1c"/></g><g transform="translate(1148,82)"><rect x="-8" y="-6" width="16" height="12" fill="#bfe4f4"/><path d="M-7.500-7v14M-2.500-7v14M2.500-7v14M7.500-7v14" stroke="#2aa6e8" stroke-width="1"/><circle cx="-7.5" cy="-7" r="1.3" fill="#1c1c1c"/><circle cx="-2.5" cy="-7" r="1.3" fill="#1c1c1c"/><circle cx="2.5" cy="-7" r="1.3" fill="#1c1c1c"/><circle cx="7.5" cy="-7" r="1.3" fill="#1c1c1c"/><circle cx="-7.5" cy="7" r="1.3" fill="#1c1c1c"/><circle cx="-2.5" cy="7" r="1.3" fill="#1c1c1c"/><circle cx="2.5" cy="7" r="1.3" fill="#1c1c1c"/><circle cx="7.5" cy="7" r="1.3" fill="#1c1c1c"/></g><g transform="translate(1100,106)"><path d="M-9-2l5-1l8 7l6-2M-4-3l1-6M4 4l-2 7" stroke="#d8a860" stroke-width="1.200" fill="none"/><circle cx="-4" cy="-3" r="1.600" fill="#fff" stroke="#1c1c1c" stroke-width="0.900"/><circle cx="4" cy="4" r="1.600" fill="#fff" stroke="#1c1c1c" stroke-width="0.900"/></g><g transform="translate(1124,106)"><path d="M-7 7l15-2" stroke="#1c1c1c" stroke-width="1.600"/><path d="M-6 6v-10M-2 5.500v-11M2 5v-12M6 4.500v-12" stroke="#2a78dc" stroke-width="1.600"/><path d="M-8-3l2-3.500l2 3.500zM-4-4.500l2-3.500l2 3.500zM0-6l2-3.500l2 3.500zM4-6.500l2-3.500l2 3.500z" fill="#2a78dc"/><circle cx="-7" cy="7" r="1.2" fill="#1c1c1c"/><circle cx="8" cy="5" r="1.2" fill="#1c1c1c"/></g><g transform="translate(1148,106)"><path d="M-6 4l12-7" stroke="#2a78dc" stroke-width="2"/><path d="M-9 5.500l5-4.500l1 5zM9-4.500l-5 4.500l-1-5z" fill="#2a78dc"/><path d="M-9 2l3 6M6-8l3 6" stroke="#1c1c1c" stroke-width="1.100"/></g><g transform="translate(1176,82)"><circle r="8" fill="#b8e060" stroke="#2a5a1a" stroke-width="0.900"/><path d="M-5-2l5-4l6 3l-2 6l-7 1z" fill="#f4e23a" stroke="#6a6a10" stroke-width="0.600"/></g><g transform="translate(1200,82)"><path d="M-8 0l8-3l9 3v5l-9 4l-8-4z" fill="#f0861a" stroke="#b85c08" stroke-width="0.600"/><path d="M0-2v-7" stroke="#2a78dc" stroke-width="1.500"/><path d="M-2.500-6l2.500-4l2.500 4z" fill="#2a78dc"/></g><g transform="translate(1224,82)"><path d="M-7 2l7 5l8-5l-7-4z" fill="#f0861a" stroke="#b85c08" stroke-width="0.600"/><path d="M-6-3q6-5 12 0" stroke="#2aa6e8" stroke-width="2.600" fill="none"/><path d="M-9-6l5 1l-3 4zM9-6l-5 1l3 4z" fill="#2a78dc"/></g><g transform="translate(1176,106)"><circle r="7.500" fill="#5ac0f0" stroke="#1a5a8a" stroke-width="1"/><circle cx="-7.5" cy="-1" r="1.5" fill="#2a6a9a"/><circle cx="5" cy="-6" r="1.5" fill="#2a6a9a"/><circle cx="6" cy="5" r="1.5" fill="#2a6a9a"/><circle cx="-4" cy="6.5" r="1.5" fill="#2a6a9a"/></g><g transform="translate(1200,106)"><path d="M-8-7l6 3l8-3l2 12l-8 4l-7-4z" fill="#2a5ac8" stroke="#0a2a78" stroke-width="0.700"/><path d="M-7-2l14 0M-6 3l13 1M-3-5l1 13M3-5l0 13" stroke="#9ac0ff" stroke-width="0.600"/><circle cx="-8" cy="-7" r="1.2" fill="#1c1c1c"/><circle cx="6" cy="-7" r="1.2" fill="#1c1c1c"/><circle cx="8" cy="5" r="1.2" fill="#1c1c1c"/><circle cx="-7" cy="5" r="1.2" fill="#1c1c1c"/></g><g transform="translate(1224,106)"><path d="M-9-4l5-4l13 12l-5 5z" fill="#e8a040" stroke="#b85c08" stroke-width="0.600"/><path d="M-7-4l4-3l5 5l-4 3zM0 2l4-3l5 5l-4 3z" fill="#2aa6e8"/></g><g transform="translate(1254,82)"><path d="M-9-4h14M-9-4l5-4M-9-4l5 4M-4 0l4 4h8M0 4l-4 4" stroke="#1c1c1c" stroke-width="1.100" fill="none"/><circle cx="5" cy="-4" r="1.3" fill="#1c1c1c"/><circle cx="8" cy="4" r="1.3" fill="#1c1c1c"/></g><g transform="translate(1277,82)"><path d="M-9 3l7-3l10 3l-8 4z" fill="#f0861a" stroke="#b85c08" stroke-width="0.600"/><path d="M-6 2v-9M-1 1v-6M5 3v-11M8 3v-7" stroke="#2aa6e8" stroke-width="1.300"/><circle cx="-6" cy="-8" r="1.3" fill="#1c1c1c"/><circle cx="5" cy="-9" r="1.3" fill="#1c1c1c"/><circle cx="8" cy="-5" r="1.3" fill="#1c1c1c"/><circle cx="-6" cy="3" r="1.3" fill="#1c1c1c"/><circle cx="5" cy="4" r="1.3" fill="#1c1c1c"/></g><g transform="translate(1254,106)"><path d="M-9 2l11-4l7 6l-12 4z" fill="#f0a030" stroke="#b85c08" stroke-width="0.600"/><path d="M0 3v-11" stroke="#1c1c1c" stroke-width="1.400"/><circle cx="0" cy="-8" r="1.6" fill="#1c1c1c"/><circle cx="0" cy="3" r="1.6" fill="#1c1c1c"/></g><g transform="translate(1306,82)"><path d="M0-8v14M-4-3h8M-7 1q1 6 7 6q6 0 7-6" stroke="#3a86e8" stroke-width="1.700" fill="none"/><path d="M-9 1h4l-2 3zM9 1h-4l2 3z" fill="#3a86e8"/><circle cy="-7.500" r="1.600" fill="none" stroke="#3a86e8" stroke-width="1"/></g><g transform="translate(1330,82)"><circle cx="1" cy="2" r="7" fill="#1a6ad8" stroke="#0a3a88" stroke-width="0.600"/><circle cx="1" cy="2" r="1.800" fill="#7ad8ff"/><path d="M-2-5q-2-4-5-2" stroke="#1c1c1c" stroke-width="1.200" fill="none"/><circle cx="-8" cy="-6" r="1.200" fill="#f0861a"/></g><g transform="translate(1354,82)"><rect x="-8" y="-2" width="16" height="9" fill="#f0861a" stroke="#b85c08" stroke-width="0.500"/><path d="M-8 1h16" stroke="#f8c060" stroke-width="1"/><circle cx="-6" cy="-7" r="1.4" fill="#1c1c1c"/><circle cx="5" cy="-3" r="1.4" fill="#1c1c1c"/><circle cx="0" cy="3.5" r="1.4" fill="#1c1c1c"/></g><g transform="translate(1306,106)"><path d="M-4-8v13M-7-1h6M-9 2q1 5 5 5q4 0 5-5" stroke="#2a9ad8" stroke-width="1.600" fill="none"/><path d="M-4-9l-2 3h4zM-1 2l8-7M0 6h9" stroke="#1c1c1c" stroke-width="0.900" fill="none"/><path d="M7-6l-3 0.500l2 2.500zM10 6l-3-1.500v3z" fill="#1c1c1c"/></g><g transform="translate(1330,106)"><path d="M-8-8l3 7l-3 8M-5-1l4 3M8-5l-4 4l5 6" stroke="#1c1c1c" stroke-width="1" fill="none"/><circle cx="-8" cy="-8" r="1.3" fill="#1c1c1c"/><circle cx="-5" cy="-1" r="1.3" fill="#1c1c1c"/><circle cx="-8" cy="7" r="1.3" fill="#1c1c1c"/><circle cx="8" cy="-5" r="1.3" fill="#1c1c1c"/><circle cx="4" cy="-1" r="1.3" fill="#1c1c1c"/><circle cx="9" cy="5" r="1.3" fill="#1c1c1c"/><path d="M-2-2h3v-2.500l4 4.500l-4 4.500v-2.500h-3z" fill="#f0501a"/></g><g transform="translate(1354,106)"><circle cy="-3" r="5.800" fill="#f0a030" stroke="#a86a10" stroke-width="0.600"/><circle cx="-1.500" cy="-5" r="2.200" fill="#f8d080"/><path d="M0 3v6M-2.500 6.500l2.500 3l2.500-3" stroke="#3a4a6a" stroke-width="1" fill="none"/></g><g transform="translate(1383,82)"><rect x="-9" y="-9" width="18" height="15" fill="#b8e0ec"/><path d="M-8 2q3-1 5-4q2-3 6-3l3-3l1.500 0.500l0.500 2.500l-2 1q0 3-2 5l1 4h-2l-2-3q-3 1-4 4h-2l1-5q-3 1-4.500 1z" fill="#c86428" stroke="#5a2a08" stroke-width="0.500"/><path d="M-9 6l2-2l2 3l2-4l2 4l2-3l2 3l2-2l2 2h2" stroke="#d02020" stroke-width="0.900" fill="none"/></g><g transform="translate(1407,82)"><rect x="-9" y="-10" width="18" height="20" fill="#f8f8f8"/><path d="M-4-3q0-5 4.500-5q4.500 0 4.500 5q0 2.500-3 5l-1 4h-3l0.500-4.500q-2.500-2-2.500-4.500z" fill="#f4c8a0" stroke="#c89060" stroke-width="0.700"/><circle cx="-1.500" cy="7" r="1.500" fill="#fff" stroke="#ccc" stroke-width="0.400"/></g><g transform="translate(1431,82)"><path d="M-9-4l18-5v12l-18 5z" fill="#b8e0ec"/><path d="M-8 2q3-1 5-4q2-3 6-3l3-3l1.500 0.500l0.500 2.500l-2 1q0 3-2 5l1 4h-2l-2-3q-3 1-4 4h-2l1-5q-3 1-4.500 1z" fill="#c86428" stroke="#5a2a08" stroke-width="0.500"/></g><g transform="translate(1383,106)"><path d="M-9-7l2-2l2.500 2.500l2.500-2.500l2 2l-2.500 2.500l2.500 2.500l-2 2l-2.500-2.500l-2.500 2.500l-2-2l2.500-2.500z" fill="#c01828"/><path d="M-1-3v12l3-2.500l2 4.500l2-1l-2-4.500h4z" fill="#fff" stroke="#1c1c1c" stroke-width="0.900"/></g><g transform="translate(1407,106)"><path d="M-10 2l8-6v8l-8 5z" fill="#a8d4c8"/><g transform="translate(2,0) scale(0.800)"><path d="M-8 2q3-1 5-4q2-3 6-3l3-3l1.500 0.500l0.500 2.500l-2 1q0 3-2 5l1 4h-2l-2-3q-3 1-4 4h-2l1-5q-3 1-4.500 1z" fill="#c86428" stroke="#5a2a08" stroke-width="0.500"/></g><path d="M-1-9v18" stroke="#1c1c1c" stroke-width="1.600"/></g><g transform="translate(1431,106)"><path d="M-9-6l18-3v10l-18 2z" fill="#b8e0ec"/><g transform="translate(0,-3) scale(0.850)"><path d="M-8 2q3-1 5-4q2-3 6-3l3-3l1.500 0.500l0.500 2.500l-2 1q0 3-2 5l1 4h-2l-2-3q-3 1-4 4h-2l1-5q-3 1-4.500 1z" fill="#c86428" stroke="#5a2a08" stroke-width="0.500"/></g><rect x="-9" y="3" width="18" height="6" fill="#1c1c1c"/><path d="M-7 6h3M-2 6h3M3 6h3" stroke="#fff" stroke-width="2.200"/></g><g transform="translate(1459.5,82)"><rect x="-7.500" y="-7.500" width="15" height="15" fill="#2aa6e8"/><path d="M-7.500-2.500h15M-7.500 2.500h15M-2.500-7.500v15M2.500-7.500v15" stroke="#0a3a6a" stroke-width="0.800"/><rect x="-2.500" y="-2.500" width="5" height="5" fill="#f4e23a"/><rect x="-7.500" y="2.500" width="5" height="5" fill="#f4e23a"/><rect x="2.500" y="-7.500" width="5" height="5" fill="#f4e23a"/><rect x="-7.500" y="-7.500" width="15" height="15" fill="none" stroke="#1c1c1c" stroke-width="1"/><circle cx="-7.5" cy="-7.5" r="1.4" fill="#1c1c1c"/><circle cx="7.5" cy="-7.5" r="1.4" fill="#1c1c1c"/><circle cx="-7.5" cy="7.5" r="1.4" fill="#1c1c1c"/><circle cx="7.5" cy="7.5" r="1.4" fill="#1c1c1c"/></g><g transform="translate(1484,82)"><path d="M-3 0l7-2l1 9l-9 1z" fill="#e87818"/><path d="M1-1l3-9" stroke="#2a6ad8" stroke-width="2.200" stroke-linecap="round"/><circle cx="-8" cy="3" r="0.7" fill="#2aa6e8"/><circle cx="-6" cy="6" r="0.7" fill="#2aa6e8"/><circle cx="-9" cy="7" r="0.7" fill="#2aa6e8"/></g><g transform="translate(1508,82)"><path d="M-9-5l4-4v14l-4 4zM9-7l-4 3v14l4-3z" fill="#f0861a"/><path d="M-4-6l3-2v12l-3 3zM4-4l-3 2v11l3-2z" fill="#f8a040"/><path d="M-5 0h7" stroke="#1c1c1c" stroke-width="1.200"/><path d="M1-2.500l3.500 2.500l-3.500 2.500z" fill="#1c1c1c"/></g><g transform="translate(1459.5,106)"><path d="M0-8l6.500 3l1.500 7l-4.500 5.500h-7l-4.500-5.500l1.500-7z" fill="#8aa8d8" stroke="#333" stroke-width="0.700"/><path d="M0 0l0-8M0 0l6.500-5M0 0l8 2M0 0l3.500 7.500M0 0l-3.500 7.500M0 0l-8-2M0 0l-6.500-3" stroke="#333" stroke-width="0.500"/><path d="M0 0l0-8l6.500 3zM0 0l8 2l-4.500 5.500zM0 0l-3.500 7.500l-4.500-5.500zM0 0l-6.500-5l-1.500 7z" fill="#e87838" opacity="0.800"/></g><g transform="translate(1484,106)"><rect x="-8" y="-8" width="16" height="16" fill="#2aa6e8" stroke="#1c1c1c" stroke-width="1"/><path d="M-8-8l16 16M8-8l-16 16M0-8l8 8l-8 8l-8-8z" stroke="#0a3a6a" stroke-width="0.900" fill="none"/><circle cx="-8" cy="-8" r="1.3" fill="#1c1c1c"/><circle cx="0" cy="-8" r="1.3" fill="#1c1c1c"/><circle cx="8" cy="-8" r="1.3" fill="#1c1c1c"/><circle cx="-8" cy="0" r="1.3" fill="#1c1c1c"/><circle cx="0" cy="0" r="1.3" fill="#1c1c1c"/><circle cx="8" cy="0" r="1.3" fill="#1c1c1c"/><circle cx="-8" cy="8" r="1.3" fill="#1c1c1c"/><circle cx="0" cy="8" r="1.3" fill="#1c1c1c"/><circle cx="8" cy="8" r="1.3" fill="#1c1c1c"/></g><g transform="translate(1508,106)"><path d="M-9-1l18 1.500l-10 6.500z" fill="#f0861a" stroke="#b85c08" stroke-width="0.600"/><path d="M-4-1q4-8 9 0.500" fill="#c8d8ff" stroke="#5a6ad8" stroke-width="0.900"/></g><g transform="translate(1535.5,82)"><circle cx="-2" cy="-6" r="2.800" fill="#2aa6e8" stroke="#0a5a7a" stroke-width="0.800"/><circle cx="-5" cy="3" r="2.800" fill="#2aa6e8" stroke="#0a5a7a" stroke-width="0.800"/><circle cx="5" cy="0" r="2.800" fill="#2aa6e8" stroke="#0a5a7a" stroke-width="0.800"/></g><g transform="translate(1560.5,82)"><path d="M-9 7q2-6 7-5q2-6 4-10l6 0l0 15z" fill="#e8a050" stroke="#6a4a2a" stroke-width="0.500"/><path d="M3 1l6-1v8h-10z" fill="#2aa6e8"/><path d="M-8 4l5-2l4 2l3-6l3-6M-3 2l3 5M4-2l4 1" stroke="#333" stroke-width="0.500" fill="none"/><path d="M-9 9h18" stroke="#2aa6e8" stroke-width="1.500"/></g><g transform="translate(1535.5,106)"><path d="M-8-5l14-3l2 16l-16-2zM-8-5l16 13M6-8l-14 14M-8 6l12-4l2-10M-8-5l12 7" stroke="#1a7a8a" stroke-width="0.900" fill="none"/><circle cx="-8" cy="-5" r="1.4" fill="#1c1c1c"/><circle cx="6" cy="-8" r="1.4" fill="#1c1c1c"/><circle cx="8" cy="8" r="1.4" fill="#1c1c1c"/><circle cx="-8" cy="6" r="1.4" fill="#1c1c1c"/><circle cx="4" cy="2" r="1.4" fill="#1c1c1c"/></g><g transform="translate(1560.5,106)"><path d="M-8.500-8v16M-6-7v16M8-8v16" stroke="#1c1c1c" stroke-width="1.300"/><circle cx="-8.5" cy="-8" r="1.2" fill="#1c1c1c"/><circle cx="-8.5" cy="8" r="1.2" fill="#1c1c1c"/><circle cx="-6" cy="9" r="1.2" fill="#1c1c1c"/><circle cx="8" cy="-8" r="1.2" fill="#1c1c1c"/><circle cx="8" cy="8" r="1.2" fill="#1c1c1c"/><path d="M-4-2.500h5v-3l5 5.500l-5 5.500v-3h-5z" fill="#fff" stroke="#3a9af0" stroke-width="1"/></g></svg>
<!-- canvas toolbar -->
<div class="abs" style="left:801px;top:133.500px;width:799px;height:6px;background:#f1f1f4"></div>
<div class="abs" style="left:803px;top:139px;width:795px;height:1.500px;background:#77777a"></div>
<div class="abs" style="left:803px;top:140.500px;width:795px;height:26px;background:#f7f7f8"></div>
<svg style="left:803px;top:140px" width="795" height="27" viewBox="803 140 795 27">
<!-- open -->
<path d="M807.500 146.500h5l1.500 1.500h6v4h-12.500z" fill="#eef6ee" stroke="#9ab89a" stroke-width="0.600"/><path d="M806.500 162v-10.500h4.500l1.500-1.500h9.500v12z" fill="#86c44e" stroke="#4a8a22" stroke-width="0.800"/>
<!-- save -->
<path d="M830.500 145h17.500v17.500h-16l-1.500-1.500z" fill="#2a4ee0" stroke="#1a2a90" stroke-width="0.700"/><rect x="833.500" y="145.500" width="11" height="7" fill="#eee"/><path d="M835 148h8M835 150h8" stroke="#e0a070" stroke-width="0.700"/><rect x="834.500" y="156" width="9" height="6" fill="#ccd"/><rect x="836" y="157" width="2.500" height="4" fill="#2a4ee0"/>
<path d="M855.500 144.500v18" stroke="#c8c8cc"/>
<!-- combo -->
<rect x="859.500" y="144.500" width="112" height="18.500" fill="#fff" stroke="#7a7a7a" stroke-width="1"/>
<text x="863" y="157" font-family="Liberation Sans,sans-serif" font-size="10.600" fill="#222" textLength="22.500" lengthAdjust="spacingAndGlyphs">192%</text>
<path d="M961.500 152l3.200 3.200l3.200-3.200" fill="none" stroke="#444" stroke-width="1"/>
<!-- zoom extents -->
<g fill="none" stroke="#1a1a1a" stroke-width="2.600"><path d="M978.500 150.500v-4.500h5M989.500 146h5v4.500M994.500 156.500v4.500h-5M983.500 161h-5v-4.500"/></g><path d="M984.500 151.500l4 4M988.500 151.500l-4 4" stroke="#1a1a1a" stroke-width="1.200"/>
<path d="M1001 152.500h4.500l-2.250 2.600z" fill="#222"/>
<!-- eye -->
<path d="M1012.500 153.500q9-10 18.500 0q-9.500 9-18.500 0z" fill="#fff" stroke="#1a6a7a" stroke-width="1.600"/><circle cx="1021.800" cy="153.300" r="4.300" fill="#3ab4d8" stroke="#0a4a5a" stroke-width="0.800"/><circle cx="1021.800" cy="153.300" r="1.800" fill="#0a2a3a"/>
<path d="M1036.500 152.500h4.500l-2.250 2.600z" fill="#222"/>
<!-- sketch -->
<path d="M1050 161l9-12.500l3.500 1.500l-1 4.500z" fill="#d8283a" stroke="#8a1020" stroke-width="0.500"/><path d="M1055 153l4 3" stroke="#fff" stroke-width="1"/><path d="M1059 148.500l2-2.500l2.500 2l-1 2z" fill="#f08090"/><path d="M1048 152q-1.500 6 1 8.500q2 1.500 4 0" fill="none" stroke="#1a1a1a" stroke-width="1.500"/>
<!-- right icons -->
<g><path d="M1436 150l7-5.500l6 3.500l-1 7l-6 3z" fill="#d8d8d8" stroke="#888" stroke-width="0.700"/><ellipse cx="1441.500" cy="158" rx="7.500" ry="4.500" fill="#333" stroke="#777" stroke-width="1"/></g>
<g fill="#f4f4f4" stroke="#555" stroke-width="0.800"><path d="M1457 154l8-9l9 5l-8 10z"/><ellipse cx="1469.500" cy="148.500" rx="4.500" ry="3" transform="rotate(28 1469.500 148.500)"/><ellipse cx="1469.500" cy="148.500" rx="2.500" ry="1.600" transform="rotate(28 1469.500 148.500)" fill="#ddd"/></g>
<rect x="1478.500" y="142.500" width="23" height="22" fill="#f2f7fc" stroke="#3f8fc8" stroke-width="1"/>
<g><path d="M1482 153l6-7q3-2.500 7-0.500q4 2.500 3 6l-5 7q-3 3-7.500 0.500q-4.500-2.500-3.500-6z" fill="#c01818" stroke="#7a0808" stroke-width="0.600"/><path d="M1488.500 146.500q3-1.500 6 0.500q3 2 2.500 4.500q-3 1.500-6-0.500q-3-2-2.500-4.500z" fill="#e03a3a" stroke="#8a1010" stroke-width="0.500"/></g>
<path d="M1508.500 145v18M1564.500 145v18" stroke="#d0d0d4"/>
<rect x="1515.500" y="142.500" width="23" height="22" fill="#f2f7fc" stroke="#3f8fc8" stroke-width="1"/>
<g><ellipse cx="1524" cy="157" rx="6" ry="5" fill="#ddd" stroke="#999" stroke-width="0.600"/><path d="M1522 150q3-5 8-3.500q5 2 4 7q-2 4-7 2.500q-5-2-5-6z" fill="#3a9a1a" stroke="#1a5a08" stroke-width="0.600"/><ellipse cx="1528.500" cy="150.500" rx="3.200" ry="2.200" fill="#7ad04a" stroke="#1a5a08" stroke-width="0.500"/><path d="M1519 146l14 15" stroke="#1a4a08" stroke-width="1"/></g>
<g><circle cx="1550" cy="153.500" r="8.300" fill="#e4e4e4" stroke="#888" stroke-width="0.700"/><path d="M1550 145.200a8.300 8.300 0 0 0 0 16.600z" fill="#e86a1a"/><circle cx="1547" cy="150" r="2.500" fill="#f8b070" opacity="0.800"/><path d="M1543 160q7 4 14 0" stroke="#a01818" stroke-width="1.500" fill="none"/></g>
<path d="M1571 153.500l3-6l7-1.500l5 4.500l-1 7l-6 3.500l-6-2z" fill="#6ab0f4" stroke="#1a3a9a" stroke-width="1.300"/><circle cx="1577" cy="151.500" r="3" fill="#a8d4ff" opacity="0.800"/>
<path d="M1590 152.500h4.500l-2.250 2.600z" fill="#222"/>
</svg>
<!-- canvas -->
<div class="abs" style="left:803px;top:166.500px;width:795px;height:712.500px;background:#d5cec8;overflow:hidden"></div>
<svg style="left:803px;top:166.500px" width="795" height="712.500" viewBox="803 166.500 795 712.500">
<defs>
<linearGradient id="sn" x1="0" y1="0" x2="0" y2="1"><stop offset="0" stop-color="#c9c9d3"/><stop offset="0.450" stop-color="#b2b2c0"/><stop offset="0.550" stop-color="#a3a3b3"/><stop offset="1" stop-color="#9999aa"/></linearGradient>
<linearGradient id="sv" x1="0" y1="0" x2="0" y2="1"><stop offset="0" stop-color="#f4f4f4"/><stop offset="0.500" stop-color="#e4e4e4"/><stop offset="1" stop-color="#d2d2d2"/></linearGradient>
<linearGradient id="cp" x1="0" y1="0" x2="0" y2="1"><stop offset="0" stop-color="#f2f2f2"/><stop offset="0.400" stop-color="#e6e6e6"/><stop offset="1" stop-color="#cfcfcf"/></linearGradient>
<radialGradient id="cg" cx="0.500" cy="0.500" r="0.500"><stop offset="0" stop-color="#ededec"/><stop offset="0.600" stop-color="#d4d6d3"/><stop offset="1" stop-color="#b2b6b2"/></radialGradient>
<linearGradient id="wg" x1="0" y1="0" x2="0" y2="1"><stop offset="0" stop-color="#f4f4f4"/><stop offset="0.450" stop-color="#d8d8d8"/><stop offset="0.550" stop-color="#a4a4a4"/><stop offset="1" stop-color="#8c8c8c"/></linearGradient>
<clipPath id="cv"><rect x="803" y="166.500" width="794.500" height="712.500"/></clipPath>
</defs>
<g clip-path="url(#cv)">
<path d="M940.7 166V879M1180.0 166V879M1420.0 166V879M803 184.3H1598M803 264.1H1598M803 344.0H1598M803 423.9H1598M803 503.7H1598M803 583.5H1598M803 663.4H1598M803 743.2H1598M803 823.1H1598" fill="none" stroke="#aaa29c" stroke-width="1"/>
<g fill="none" stroke="#5e5952" stroke-width="4.600" stroke-linecap="butt" stroke-linejoin="round">
<path d="M1032.5 166.9L1038.1 167.7L1043.6 168.5L1049.2 169.3L1054.7 170.1L1060.3 170.9L1065.8 171.7L1071.4 172.5L1076.9 173.3L1082.5 174.1L1088.1 174.9L1093.6 175.7L1099.2 176.5L1104.7 177.3L1110.3 178.0L1115.8 178.8L1121.4 179.6L1127.0 180.4L1132.5 181.2L1138.1 181.9L1143.6 182.7L1149.2 183.4L1154.7 184.2L1160.3 184.9L1165.8 185.6L1171.4 186.3L1177.0 187.1L1182.5 187.8L1188.1 188.4L1193.6 189.1L1199.2 189.8L1204.7 190.4L1210.3 191.1L1215.9 191.7L1221.4 192.3L1227.0 192.9L1232.5 193.5L1238.1 194.1L1243.6 194.7L1249.2 195.3L1254.7 195.8L1260.3 196.3L1265.9 196.8L1271.4 197.4L1277.0 197.8L1282.5 198.3L1288.1 198.8L1293.6 199.2L1299.2 199.7L1304.8 200.1L1310.3 200.5L1315.9 200.9L1321.4 201.3L1327.0 201.6L1332.5 202.0L1338.1 202.3L1343.6 202.7L1349.2 203.0L1354.8 203.3L1360.3 203.6L1365.9 203.8L1371.4 204.1L1377.0 204.3L1382.5 204.6L1388.1 204.8L1393.7 205.0L1399.2 205.2L1404.8 205.4L1410.3 205.5L1415.9 205.7L1421.4 205.8L1427.0 206.0L1432.5 206.1L1438.1 206.2L1443.7 206.3L1449.2 206.4L1454.8 206.5L1460.3 206.6L1465.9 206.7L1471.4 206.7L1477.0 206.8L1482.6 206.8L1488.1 206.9L1493.7 206.9L1499.2 206.9L1504.8 207.0L1510.3 207.0L1515.9 207.0L1521.4 207.0L1527.0 207.0"/><path d="M802.8 186.0L811.4 190.2L820.0 194.4L828.7 198.6L837.3 202.8L845.9 207.0L854.5 211.1L863.1 215.2L871.8 219.3L880.4 223.4L889.0 227.4L897.6 231.4L906.2 235.4L914.9 239.4L923.5 243.3L932.1 247.1L940.7 251.0L949.3 254.7L958.0 258.5L966.6 262.2L975.2 265.8L983.8 269.5L992.4 273.0L1001.1 276.5L1009.7 280.0L1018.3 283.4L1026.9 286.8L1035.5 290.1L1044.2 293.3L1052.8 296.5L1061.4 299.6L1070.0 302.7L1078.6 305.7L1087.3 308.7L1095.9 311.6L1104.5 314.4L1113.1 317.2L1121.7 319.9L1130.4 322.6L1139.0 325.2L1147.6 327.7L1156.2 330.2L1164.8 332.6L1173.5 334.9L1182.1 337.2L1190.7 339.4L1199.3 341.6L1208.0 343.6L1216.6 345.7L1225.2 347.6L1233.8 349.5L1242.4 351.3L1251.1 353.1L1259.7 354.8L1268.3 356.4L1276.9 358.0L1285.5 359.5L1294.2 361.0L1302.8 362.4L1311.4 363.7L1320.0 365.0L1328.6 366.2L1337.3 367.4L1345.9 368.5L1354.5 369.5L1363.1 370.5L1371.7 371.4L1380.4 372.3L1389.0 373.1L1397.6 373.9L1406.2 374.6L1414.8 375.3L1423.5 376.0L1432.1 376.5L1440.7 377.1L1449.3 377.6L1457.9 378.0L1466.6 378.5L1475.2 378.8L1483.8 379.2L1492.4 379.5L1501.0 379.8L1509.7 380.0L1518.3 380.2L1526.9 380.4L1535.5 380.6L1544.1 380.7L1552.8 380.9L1561.4 381.0L1570.0 381.0"/><path d="M802.8 288.6L811.0 294.8L819.2 301.1L827.4 307.3L835.7 313.5L843.9 319.7L852.1 325.9L860.3 332.0L868.5 338.1L876.7 344.2L885.0 350.2L893.2 356.2L901.4 362.1L909.6 368.0L917.8 373.9L926.0 379.6L934.3 385.4L942.5 391.0L950.7 396.6L958.9 402.1L967.1 407.5L975.3 412.9L983.5 418.2L991.8 423.4L1000.0 428.5L1008.2 433.5L1016.4 438.5L1024.6 443.3L1032.8 448.1L1041.1 452.7L1049.3 457.3L1057.5 461.8L1065.7 466.1L1073.9 470.4L1082.1 474.6L1090.4 478.7L1098.6 482.7L1106.8 486.5L1115.0 490.3L1123.2 494.0L1131.4 497.6L1139.6 501.1L1147.9 504.5L1156.1 507.8L1164.3 511.0L1172.5 514.1L1180.7 517.1L1188.9 520.1L1197.2 522.9L1205.4 525.7L1213.6 528.4L1221.8 530.9L1230.0 533.5L1238.2 535.9L1246.4 538.2L1254.7 540.5L1262.9 542.7L1271.1 544.8L1279.3 546.9L1287.5 548.8L1295.7 550.7L1304.0 552.5L1312.2 554.3L1320.4 556.0L1328.6 557.6L1336.8 559.1L1345.0 560.5L1353.3 561.9L1361.5 563.3L1369.7 564.5L1377.9 565.7L1386.1 566.8L1394.3 567.9L1402.5 568.8L1410.8 569.7L1419.0 570.6L1427.2 571.4L1435.4 572.1L1443.6 572.7L1451.8 573.3L1460.1 573.8L1468.3 574.3L1476.5 574.7L1484.7 575.0L1492.9 575.3L1501.1 575.5L1509.4 575.6L1517.6 575.7L1525.8 575.7L1534.0 575.6"/>
<path d="M1456 239H1528"/><path d="M1303 607.800H1538"/>
</g>
<!-- slider 1 -->
<g>
<rect x="1126" y="223" width="324" height="32" rx="4" fill="url(#sv)" stroke="#1c1c1c" stroke-width="1.600"/>
<path d="M1130 223h128.500v32h-128.500q-4 0-4-4v-24q0-4 4-4z" fill="url(#sn)" stroke="#1c1c1c" stroke-width="1.600"/>
<path d="M1258.500 223.800v30.400" stroke="#1c1c1c" stroke-width="2"/>
<path d="M1450.500 233.300a5.800 5.800 0 0 1 0 11.600" fill="#fff" stroke="#161616" stroke-width="2.200"/>
<path d="M1274 233v5.500h70M1398 238.500h38v-5.500M1290 236.500v2M1306.500 236.500v2M1322.500 236.500v2M1339 235v3.500M1403.500 236.500v2M1420 236.500v2" fill="none" stroke="#b0b0b0" stroke-width="0.900"/>
<circle cx="1350.400" cy="239" r="5" fill="#fff" stroke="#111" stroke-width="2.600"/>
<text x="1137" y="244.600" font-family="Liberation Sans,sans-serif" font-size="15.600" fill="#1a1a1a" textLength="110" lengthAdjust="spacingAndGlyphs">Number Slider</text>
<text x="1362.500" y="244.600" font-family="Liberation Sans,sans-serif" font-size="14.600" fill="#1a1a1a" textLength="31" lengthAdjust="spacingAndGlyphs">0.95</text>
</g>
<!-- slider 2 -->
<g>
<rect x="973" y="592" width="324" height="31.500" rx="4" fill="url(#sv)" stroke="#1c1c1c" stroke-width="1.600"/>
<path d="M977 592h128v31.500h-128q-4 0-4-4v-23.500q0-4 4-4z" fill="url(#sn)" stroke="#1c1c1c" stroke-width="1.600"/>
<path d="M1105 592.800v29.900" stroke="#1c1c1c" stroke-width="2"/>
<path d="M1297.500 602a5.800 5.800 0 0 1 0 11.600" fill="#fff" stroke="#161616" stroke-width="2.200"/>
<path d="M1121 601.500v5.500h53M1248 607h33v-5.500M1137 605v2M1153 605v2M1169 605v2M1249 605v2M1265 605v2" fill="none" stroke="#b0b0b0" stroke-width="0.900"/>
<circle cx="1180.600" cy="607.800" r="5" fill="#fff" stroke="#111" stroke-width="2.600"/>
<text x="983.500" y="613.300" font-family="Liberation Sans,sans-serif" font-size="15.600" fill="#1a1a1a" textLength="110.500" lengthAdjust="spacingAndGlyphs">Number Slider</text>
<text x="1193" y="613.300" font-family="Liberation Sans,sans-serif" font-size="14.600" fill="#1a1a1a" textLength="50" lengthAdjust="spacingAndGlyphs">369.60</text>
</g>
<!-- components -->
<g font-family="Liberation Sans,sans-serif" font-size="15.600" fill="#1a1a1a">
<rect x="1531.500" y="188" width="90" height="101.500" rx="4.500" fill="url(#cp)" stroke="#2a2a2a" stroke-width="1.400"/>
<rect x="1575.500" y="359" width="60" height="44" rx="4.500" fill="url(#cp)" stroke="#2a2a2a" stroke-width="1.400"/>
<rect x="1541.500" y="557" width="90" height="69.500" rx="4.500" fill="url(#cp)" stroke="#2a2a2a" stroke-width="1.400"/>
<text x="1544.300" y="244.700" textLength="51" lengthAdjust="spacingAndGlyphs">Length</text><text x="1578.500" y="276.300" textLength="66" lengthAdjust="spacingAndGlyphs">Strength</text>
<text x="1586.500" y="386.500">G</text>
<text x="1578" y="581" textLength="40" lengthAdjust="spacingAndGlyphs">Mesh</text><text x="1553" y="613.300" textLength="66" lengthAdjust="spacingAndGlyphs">Strength</text>
<g fill="#fff" stroke="#161616" stroke-width="2.200">
<path d="M1531.500 201.500a5.600 5.600 0 0 0 0 11.200"/><path d="M1531.500 233.400a5.600 5.600 0 0 0 0 11.200"/><path d="M1531.500 265.400a5.600 5.600 0 0 0 0 11.200"/>
<path d="M1575.500 375.400a5.600 5.600 0 0 0 0 11.200"/>
<path d="M1541.500 570a5.600 5.600 0 0 0 0 11.200"/><path d="M1541.500 602.200a5.600 5.600 0 0 0 0 11.200"/>
</g>
</g>
<!-- compass -->
<g transform="translate(1560.900,842.800)"><path d="M-16.900-4.500A17.500 17.500 0 0 1 10-14.300" fill="none" stroke="#111" stroke-width="3.400"/><path d="M-25.900-6.500L-17.500-8.500L-20.300-1.600Z" fill="#111"/><circle r="17.200" fill="#151515"/><circle r="16.200" fill="#fcfcfc"/><circle r="14.800" fill="url(#cg)"/><path d="M9.2 11.5L11.5 9.2L6.7 6.7ZM-11.5 9.2L-9.2 11.5L-6.7 6.7ZM-9.2 -11.5L-11.5 -9.2L-6.7 -6.7ZM11.5 -9.2L9.2 -11.5L6.7 -6.7Z" fill="#fbfbfb"/></g>
<!-- widget bottom-left -->
<rect x="803" y="856" width="75" height="22.500" fill="url(#wg)" stroke="#2c2c2c" stroke-width="1.300"/>
<g><path d="M810.500 858h5.500q2.500 0 2.500 2.500v4.500h-6.500q-2.500 0-2.500 2.500v3h-2.500q-2.500 0-2.500-3v-2.500q0-3 2.500-3h6v-1h-5v-1q0-2 2.500-2z" fill="#4a7ed8" stroke="#1a2a7a" stroke-width="0.700"/><path d="M819.500 862.500h2.500q2.500 0 2.500 3v2.500q0 3-2.500 3h-6v1h5v1.500q0 2-2.500 2h-5.500q-2.500 0-2.500-2.500v-4.500h6.500q2.500 0 2.500-2.500z" fill="#f0b018" stroke="#7a4a08" stroke-width="0.700"/><circle cx="811.500" cy="860" r="0.800" fill="#fff"/><circle cx="817.500" cy="874" r="0.800" fill="#fff"/></g>
<rect x="828" y="857.300" width="19.500" height="19.700" rx="2.200" fill="#f8d428" stroke="#86780e" stroke-width="1"/><path d="M831 872.500l2.500-2.500l0.500 3.500l3-7l0.800 6.500l3-8.500l1 7.500l2.500-7.500l0.500 6" fill="none" stroke="#c07a10" stroke-width="1.400" stroke-linejoin="round"/>
<path d="M851 867l5-8.800h10l5 8.800l-5 8.800h-10z" fill="#1c1c1c"/><path d="M857.800 863.800l6.400 6.400M864.200 863.800l-6.400 6.400" stroke="#fff" stroke-width="2.200"/>
</g>
</svg>
<!-- gh status bar -->
<div class="abs" style="left:801px;top:879px;width:799px;height:21px;background:#f0f0f2"></div>
<div class="abs" style="left:801px;top:879px;width:799px;height:1px;background:#fafafa"></div>
<svg style="left:804px;top:883.500px" width="14" height="14" viewBox="0 0 14 14"><defs><radialGradient id="ig" cx="0.400" cy="0.350" r="0.700"><stop offset="0" stop-color="#6aa8f0"/><stop offset="1" stop-color="#123a9c"/></radialGradient></defs><circle cx="7" cy="7" r="6.500" fill="url(#ig)" stroke="#0e2a78" stroke-width="0.600"/><path d="M6 3h2l-0.400 5h-1.200z" fill="#fff"/><circle cx="7" cy="10.200" r="1.100" fill="#fff"/></svg>
<div class="t" style="left:820.500px;top:886px;font-size:9.800px;letter-spacing:-0.050px;color:#151515;-webkit-text-stroke:0.200px #151515">Autosave complete (5 seconds ago)</div>
<div class="t" style="left:1538.300px;top:886.200px;font-size:9.500px;letter-spacing:-0.250px;color:#7a7a7a">1.0.0007</div>
<svg style="left:1588px;top:888px" width="9" height="9" viewBox="0 0 9 9" fill="#999"><rect x="6" y="0" width="1.500" height="1.500"/><rect x="3" y="3" width="1.500" height="1.500"/><rect x="6" y="3" width="1.500" height="1.500"/><rect x="0" y="6" width="1.500" height="1.500"/><rect x="3" y="6" width="1.500" height="1.500"/><rect x="6" y="6" width="1.500" height="1.500"/></svg>
<!-- window borders -->
<div class="abs" style="left:801px;top:66px;width:1.700px;height:74px;background:#6c6c6e"></div>
<div class="abs" style="left:801px;top:140px;width:2px;height:739px;background:#928e8a"></div>
<div class="abs" style="left:1597.400px;top:0;width:1.100px;height:900px;background:#8e8e92"></div>
<div class="abs" style="left:1598.500px;top:0;width:1.500px;height:900px;background:#f6f6fa"></div>
<div class="abs" style="left:801px;top:898.500px;width:799px;height:1.500px;background:#3a3a3c"></div>
<!-- Talking overlay -->
<div class="abs" style="left:1339.200px;top:24px;width:238px;height:35.500px;background:#222b36;border-radius:3px;box-shadow:0 1px 4px rgba(0,0,0,0.450)"></div>
<div class="t" style="left:1360px;top:35.800px;font-size:13.300px;color:#ececec">Talking:</div>
</div></div>
</div>
</body>
</html>
